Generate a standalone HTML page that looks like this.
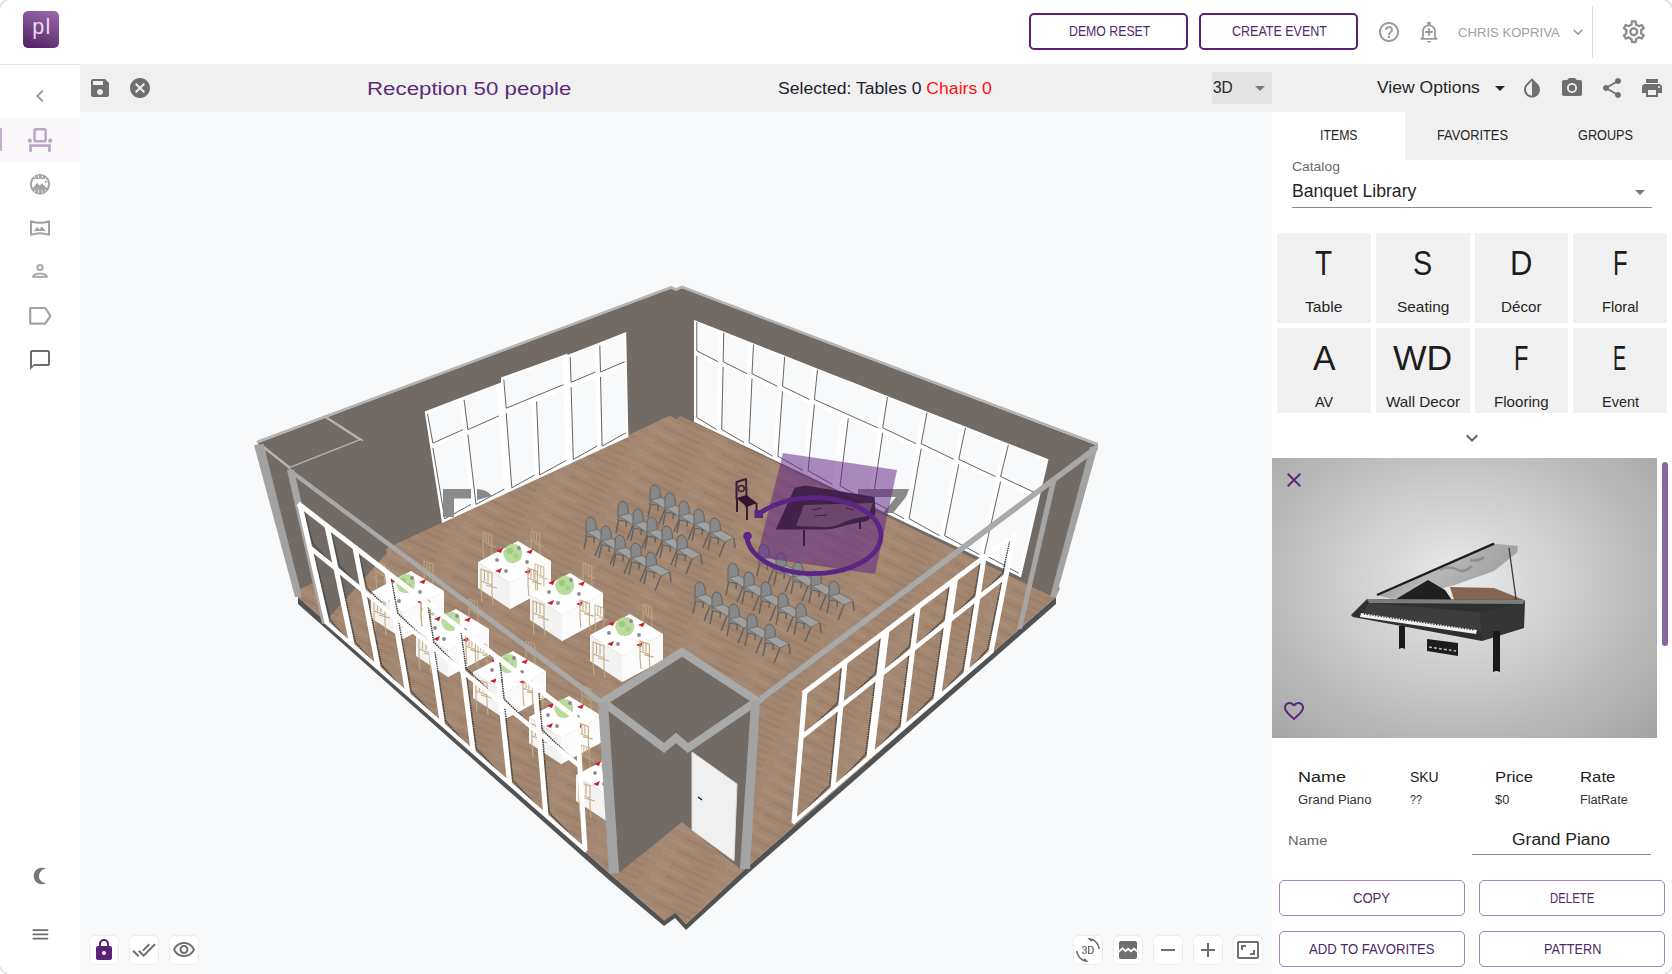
<!DOCTYPE html>
<html><head><meta charset="utf-8"><title>Planner</title>
<style>
html,body{margin:0;padding:0;}
body{width:1672px;height:974px;position:relative;overflow:hidden;background:#fff;font-family:"Liberation Sans",sans-serif;}
.t{position:absolute;white-space:nowrap;line-height:1;}
.c{text-align:center;}
.ic{position:absolute;}
</style></head><body>
<div style="position:absolute;left:0;top:0;width:1672px;height:64px;background:#fff;border-bottom:1px solid #e4e4e4"></div>
<div style="position:absolute;left:23px;top:11px;width:36px;height:37px;border-radius:5px;background:linear-gradient(200deg,#9a6aa8 0%,#7a4a8e 45%,#4e1e5e 100%)"></div>
<div class="t" style="left:32.30px;top:16.87px;font-size:21.54px;color:#eadcf0;letter-spacing:1.245px;">pl</div>
<div style="position:absolute;left:1029px;top:13px;width:155px;height:33px;border:2px solid #5b1f76;border-radius:5px"></div>
<div style="position:absolute;left:1199px;top:13px;width:155px;height:33px;border:2px solid #5b1f76;border-radius:5px"></div>
<div class="t" style="left:1068.70px;top:25.45px;font-size:13.72px;color:#4d2a6e;transform:scaleX(0.8964);transform-origin:0 0;">DEMO RESET</div>
<div class="t" style="left:1231.80px;top:25.45px;font-size:13.72px;color:#4d2a6e;transform:scaleX(0.9110);transform-origin:0 0;">CREATE EVENT</div>
<svg class="ic" style="left:1377px;top:20px;width:24px;height:24px" viewBox="0 0 24 24"><path fill="#9a9a9a" d="M11 18h2v-2h-2v2zm1-16C6.48 2 2 6.48 2 12s4.48 10 10 10 10-4.48 10-10S17.52 2 12 2zm0 18c-4.41 0-8-3.59-8-8s3.59-8 8-8 8 3.59 8 8-3.59 8-8 8zm0-14c-2.21 0-4 1.79-4 4h2c0-1.1.9-2 2-2s2 .9 2 2c0 2-3 1.75-3 5h2c0-2.25 3-2.5 3-5 0-2.21-1.79-4-4-4z"/></svg>
<svg class="ic" style="left:1417px;top:20px;width:24px;height:24px" viewBox="0 0 24 24"><path fill="none" stroke="#9a9a9a" stroke-width="1.8" stroke-linejoin="round" d="M6 17.2V11.6C6 8.4 8.2 6 11.1 5.4V2.6h1.8v2.8c2.9.6 5.1 3 5.1 6.2v5.6l1.7 1.6H4.3Z"/><path fill="#9a9a9a" d="M9.9 21.1h4.2c-.3 1-1.1 1.7-2.1 1.7s-1.8-.7-2.1-1.7z"/><path stroke="#9a9a9a" stroke-width="1.9" d="M12 8.2v7.5M8.2 12h7.5"/></svg>
<div class="t" style="left:1457.60px;top:25.60px;font-size:13.58px;color:#a0a0a0;transform:scaleX(0.9649);transform-origin:0 0;">CHRIS KOPRIVA</div>
<svg class="ic" style="left:1568px;top:22px;width:20px;height:20px" viewBox="0 0 24 24"><path fill="#9a9a9a" d="M16.59 8.59L12 13.17 7.41 8.59 6 10l6 6 6-6z"/></svg>
<div style="position:absolute;left:1592px;top:6px;width:1px;height:52px;background:#d8dce2"></div>
<svg class="ic" style="left:1619.7px;top:17.7px;width:27.6px;height:27.6px" viewBox="0 0 24 24"><path fill="#8e8e8e" d="M19.43 12.98c.04-.32.07-.64.07-.98 0-.34-.03-.66-.07-.98l2.11-1.65c.19-.15.24-.42.12-.64l-2-3.46a.5.5 0 0 0-.61-.22l-2.49 1c-.52-.4-1.08-.73-1.69-.98l-.38-2.65A.488.488 0 0 0 14 2h-4c-.25 0-.46.18-.49.42l-.38 2.65c-.61.25-1.17.59-1.69.98l-2.49-1a.566.566 0 0 0-.18-.03c-.17 0-.34.09-.43.25l-2 3.46c-.13.22-.07.49.12.64l2.11 1.65c-.04.32-.07.65-.07.98s.03.66.07.98l-2.11 1.65c-.19.15-.24.42-.12.64l2 3.46a.5.5 0 0 0 .61.22l2.49-1c.52.4 1.08.73 1.69.98l.38 2.650c.03.24.24.42.49.42h4c.25 0 .46-.18.49-.42l.38-2.65c.61-.25 1.170-.59 1.69-.98l2.49 1c.06.02.12.03.18.03.17 0 .34-.09.43-.25l2-3.46c.12-.22.07-.49-.12-.64l-2.11-1.65zm-1.98-1.71c.04.31.05.52.05.73 0 .21-.02.43-.05.73l-.14 1.13.89.7 1.08.84-.7 1.21-1.27-.51-1.04-.42-.9.68c-.43.32-.84.56-1.25.73l-1.06.43-.16 1.13-.2 1.35h-1.4l-.19-1.35-.16-1.13-1.06-.43c-.43-.18-.83-.41-1.23-.71l-.91-.7-1.06.43-1.27.51-.7-1.21 1.08-.84.89-.7-.14-1.13c-.03-.31-.05-.54-.05-.74s.02-.43.05-.73l.14-1.13-.89-.7-1.08-.84.7-1.21 1.27.51 1.04.42.9-.68c.43-.32.84-.56 1.25-.73l1.06-.43.16-1.13.2-1.35h1.39l.19 1.35.16 1.13 1.06.43c.43.18.83.41 1.23.71l.91.7 1.06-.43 1.27-.51.7 1.21-1.07.85-.89.7.14 1.13zM12 8c-2.21 0-4 1.79-4 4s1.79 4 4 4 4-1.790 4-4-1.79-4-4-4zm0 6c-1.1 0-2-.9-2-2s.9-2 2-2 2 .9 2 2-.9 2-2 2z"/></svg>
<div style="position:absolute;left:0;top:65px;width:80px;height:909px;background:#fff"></div>
<div style="position:absolute;left:0;top:118px;width:80px;height:44px;background:#f9f7fa"></div>
<div style="position:absolute;left:0;top:128px;width:2px;height:23px;background:#c6aed0"></div>
<svg class="ic" style="left:28px;top:84px;width:24px;height:24px" viewBox="0 0 24 24"><path fill="#9c9c9c" d="M15.41 7.41L14 6l-6 6 6 6 1.41-1.41L10.83 12z"/></svg>
<svg class="ic" style="left:26px;top:126px;width:28px;height:28px" viewBox="26 126 28 28"><rect x="34.55" y="129.25" width="11.1" height="12.1" rx="1.6" fill="none" stroke="#bca3c9" stroke-width="2.5"/><circle cx="29.9" cy="140.7" r="2.1" fill="#bca3c9"/><circle cx="50.2" cy="140.7" r="2.1" fill="#bca3c9"/><rect x="29.2" y="144.2" width="21.6" height="2.7" fill="#bca3c9"/><rect x="29.2" y="146" width="2.7" height="5.8" fill="#bca3c9"/><rect x="48.1" y="146" width="2.7" height="5.8" fill="#bca3c9"/></svg>
<svg class="ic" style="left:28px;top:172px;width:24px;height:24px" viewBox="28 172 24 24"><circle cx="40" cy="184.3" r="9.2" fill="none" stroke="#a3a3a3" stroke-width="2"/><path fill="#a3a3a3" d="M32.48,179 A9.2,9.2 0 0 1 47.52,179 Z M32.48,189.6 A9.2,9.2 0 0 0 47.52,189.6 Z"/><path stroke="#fff" stroke-width="1" d="M34.5,176.2 l0.8,2 M38.5,175.5 l0,2.5 M42.5,175.8 l-0.6,2.3 M46,177.5 l-1,1.4 M34.5,192.4 l0.8,-2 M38.5,193 l0,-2.6 M42.5,192.8 l-0.6,-2.3 M46,191.2 l-1,-1.4"/><path fill="#a3a3a3" d="M31.5,189.8 L37.2,182.8 L39.6,185.6 L42,183.4 L48.5,189.8 Z"/><circle cx="45.8" cy="181.8" r="1.1" fill="#a3a3a3"/></svg>
<svg class="ic" style="left:28px;top:216px;width:24px;height:24px" viewBox="0 0 24 24"><path fill="none" stroke="#a0a0a0" stroke-width="2" stroke-linejoin="round" d="M3 5.2c6 2.2 12 2.2 18 0v13.6c-6-2.2-12-2.2-18 0z"/><path fill="#a0a0a0" d="M6 15.3l3-4.3 2.4 2.6 2.4-3.2 4.2 4.9c-4-.5-8-.5-12 0z"/></svg>
<svg class="ic" style="left:28px;top:260px;width:24px;height:24px" viewBox="0 0 24 24"><circle cx="12" cy="7.5" r="2.6" fill="none" stroke="#a3a3a3" stroke-width="1.8"/><path fill="none" stroke="#a3a3a3" stroke-width="1.8" d="M5 16.8h14c0-1.6-3-3.2-7-3.2s-7 1.6-7 3.2z"/></svg>
<svg class="ic" style="left:28px;top:304px;width:24px;height:24px" viewBox="28 304 24 24"><path fill="none" stroke="#a3a3a3" stroke-width="2.2" stroke-linejoin="round" d="M30.2,308 h15 l5.2,7.8 -5.2,7.8 h-15 z"/></svg>
<svg class="ic" style="left:28.3px;top:347.6px;width:24px;height:24px" viewBox="0 0 24 24"><path fill="#6e6e6e" d="M20 2H4c-1.1 0-2 .9-2 2v18l4-4h14c1.1 0 2-.9 2-2V4c0-1.1-.9-2-2-2zm0 14H6l-2 2V4h16v12z"/></svg>
<svg class="ic" style="left:28px;top:864px;width:24px;height:24px" viewBox="28 864 24 24"><path fill="#777" d="M46.14,868.8 A8.3,8.3 0 1 0 46.14,883.2 A7.2,7.2 0 0 1 46.14,868.8 Z"/></svg>
<svg class="ic" style="left:29.7px;top:923.8px;width:20.8px;height:20.8px" viewBox="0 0 24 24"><path fill="#6e6e6e" d="M3 18h18v-2H3v2zm0-5h18v-2H3v2zm0-7v2h18V6H3z"/></svg>
<div style="position:absolute;left:80px;top:64px;width:1592px;height:48px;background:#f0f0f0"></div>
<svg class="ic" style="left:88px;top:76px;width:24px;height:24px" viewBox="0 0 24 24"><path fill="#6f6f6f" d="M17 3H5c-1.11 0-2 .9-2 2v14c0 1.1.89 2 2 2h14c1.1 0 2-.9 2-2V7l-4-4zm-5 16c-1.66 0-3-1.34-3-3s1.34-3 3-3 3 1.34 3 3-1.34 3-3 3zm3-10H5V5h10v4z"/></svg>
<svg class="ic" style="left:128px;top:76px;width:24px;height:24px" viewBox="0 0 24 24"><path fill="#6f6f6f" d="M12 2C6.47 2 2 6.47 2 12s4.47 10 10 10 10-4.47 10-10S17.53 2 12 2zm5 13.59L15.59 17 12 13.41 8.41 17 7 15.59 10.59 12 7 8.41 8.41 7 12 10.59 15.59 7 17 8.41 13.41 12 17 15.59z"/></svg>
<div class="t" style="left:366.60px;top:78.74px;font-size:19.20px;color:#5a2d79;transform:scaleX(1.1613);transform-origin:0 0;">Reception 50 people</div>
<div class="t" style="left:778.00px;top:79.71px;font-size:16.05px;color:#22222e;transform:scaleX(1.0975);transform-origin:0 0;">Selected: Tables 0 <span style="color:#ff1010">Chairs 0</span></div>
<div style="position:absolute;left:1212px;top:72px;width:60px;height:32px;background:#e3e3e3"></div>
<div class="t" style="left:1212.70px;top:79.55px;font-size:16.60px;color:#262626;transform:scaleX(0.9334);transform-origin:0 0;">3D</div>
<svg class="ic" style="left:1248px;top:76px;width:24px;height:24px" viewBox="0 0 24 24"><path fill="#777" d="M7 10l5 5 5-5z"/></svg>
<div class="t" style="left:1376.50px;top:78.97px;font-size:17.28px;color:#262626;transform:scaleX(1.0145);transform-origin:0 0;">View Options</div>
<svg class="ic" style="left:1488px;top:76px;width:24px;height:24px" viewBox="0 0 24 24"><path fill="#262626" d="M7 10l5 5 5-5z"/></svg>
<svg class="ic" style="left:1520px;top:76.3px;width:24px;height:24px" viewBox="0 0 24 24"><path fill="#6f6f6f" d="M17.66 7.93L12 2.27 6.34 7.93c-3.12 3.12-3.12 8.19 0 11.31C7.9 20.8 9.95 21.58 12 21.58c2.05 0 4.1-.78 5.66-2.34 3.12-3.12 3.12-8.19 0-11.31zM12 19.59c-1.6 0-3.11-.62-4.24-1.76C6.62 16.69 6 15.19 6 13.59s.62-3.11 1.76-4.24L12 5.1v14.49z"/></svg>
<svg class="ic" style="left:1560px;top:76px;width:24px;height:24px" viewBox="0 0 24 24"><path fill="#6f6f6f" d="M12 15.2A3.2 3.2 0 1 0 12 8.8a3.2 3.2 0 1 0 0 6.4zM9 2L7.17 4H4c-1.1 0-2 .9-2 2v12c0 1.1.9 2 2 2h16c1.1 0 2-.9 2-2V6c0-1.1-.9-2-2-2h-3.17L15 2H9zm3 15c-2.76 0-5-2.24-5-5s2.24-5 5-5 5 2.24 5 5-2.24 5-5 5z"/></svg>
<svg class="ic" style="left:1600px;top:76px;width:24px;height:24px" viewBox="0 0 24 24"><path fill="#6f6f6f" d="M18 16.08c-.76 0-1.44.3-1.96.77L8.91 12.7c.05-.23.09-.46.09-.7s-.04-.47-.09-.7l7.05-4.11c.54.5 1.25.81 2.04.81 1.66 0 3-1.34 3-3s-1.34-3-3-3-3 1.34-3 3c0 .24.04.47.09.7L8.04 9.81C7.5 9.31 6.79 9 6 9c-1.66 0-3 1.34-3 3s1.34 3 3 3c.79 0 1.5-.31 2.04-.81l7.12 4.16c-.05.21-.08.43-.08.65 0 1.61 1.31 2.92 2.92 2.92 1.61 0 2.92-1.31 2.92-2.92s-1.31-2.92-2.92-2.92z"/></svg>
<svg class="ic" style="left:1640px;top:76px;width:24px;height:24px" viewBox="0 0 24 24"><path fill="#6f6f6f" d="M19 8H5c-1.66 0-3 1.34-3 3v6h4v4h12v-4h4v-6c0-1.66-1.34-3-3-3zm-3 11H8v-5h8v5zm3-7c-.55 0-1-.45-1-1s.45-1 1-1 1 .45 1 1-.45 1-1 1zm-1-9H6v4h12V3z"/></svg>
<div style="position:absolute;left:80px;top:112px;width:1192px;height:862px;background:#f8f9fa"></div>
<svg style="position:absolute;left:0;top:0;width:1672px;height:974px" viewBox="0 0 1672 974">
<defs>
<pattern id="wood" width="64" height="14" patternUnits="userSpaceOnUse" patternTransform="rotate(25)">
<rect x="0" y="0" width="30" height="3.5" fill="#ad947f" opacity="0.45"/>
<rect x="36" y="1" width="20" height="2.5" fill="#937862" opacity="0.35"/>
<rect x="14" y="7" width="40" height="3" fill="#8f735e" opacity="0.35"/>
<rect x="0" y="10.5" width="12" height="2.5" fill="#b09884" opacity="0.35"/>
<rect x="50" y="10" width="14" height="3" fill="#a99079" opacity="0.4"/>
</pattern>
<filter id="soft" x="0" y="0" width="1" height="1"><feGaussianBlur stdDeviation="0.7"/></filter>
</defs>
<g>
<polygon points="298.0,597.0 609.0,873.0 664.0,920.0 675.0,912.0 686.0,924.0 745.0,869.0 1056.0,597.0 1056.0,604.0 745.0,876.0 686.0,930.0 675.0,918.0 664.0,926.0 609.0,880.0 298.0,604.0" fill="#525252" />
<polygon points="676.0,405.0 294.0,588.0 298.0,597.0 609.0,873.0 664.0,920.0 675.0,912.0 686.0,924.0 745.0,869.0 1056.0,597.0 1060.0,588.0" fill="#a2866f" />
<polygon points="676.0,405.0 294.0,588.0 298.0,597.0 609.0,873.0 664.0,920.0 675.0,912.0 686.0,924.0 745.0,869.0 1056.0,597.0 1060.0,588.0" fill="url(#wood)" />
<polygon points="258.0,443.0 671.0,288.0 676.0,290.0 682.0,288.0 1096.0,445.0 1051.0,596.0 680.5,416.0 676.0,419.0 670.0,415.5 300.0,589.0" fill="#726a64" />
<path d="M257,442 L671,287.5 L676,289.5 L682,287 L1097,444" fill="none" stroke="#b4b4b4" stroke-width="2.6"/>
<path d="M261,445 L290,468 L361,440 L324,416" fill="none" stroke="#b4b4b4" stroke-width="2.5"/>
<polygon points="254.0,445.0 263.5,444.0 302.0,597.0 295.0,597.0" fill="#a2a2a2" />
<polygon points="1090.0,447.0 1098.0,446.0 1056.0,597.0 1050.0,597.0" fill="#a2a2a2" />
<polygon points="424.7,411.6 461.3,397.6 461.3,397.6 498.5,383.4 498.5,383.4 501.0,382.5 501.0,377.6 532.5,366.2 532.5,366.2 564.9,354.4 564.9,354.4 567.4,353.5 567.4,355.0 597.0,343.4 597.0,343.4 626.2,331.9 628.4,436.9 599.3,450.3 570.5,463.6 568.0,464.8 536.8,479.2 509.0,492.0 506.6,493.2 473.2,508.6 442.0,523.0" fill="#ffffff" /><polygon points="426.9,413.8 459.1,399.8 462.9,430.2 432.3,443.6" fill="#f8f9fa" /><path d="M427.5,413.8 L432.9,443.1 L462.9,429.7" fill="none" stroke="#555" stroke-width="0.9"/><polygon points="432.3,448.0 462.9,434.6 471.0,504.9 444.2,519.3" fill="#f8f9fa" /><path d="M432.9,448.0 L444.8,518.8 L471.0,504.4" fill="none" stroke="#555" stroke-width="0.9"/><polygon points="463.5,399.8 496.3,385.6 498.9,416.4 467.3,430.2" fill="#f8f9fa" /><path d="M464.1,399.8 L467.9,429.7 L498.9,415.9" fill="none" stroke="#555" stroke-width="0.9"/><polygon points="467.3,434.6 498.9,420.8 504.4,489.5 475.4,504.9" fill="#f8f9fa" /><path d="M467.9,434.6 L476.0,504.4 L504.4,489.0" fill="none" stroke="#555" stroke-width="0.9"/><polygon points="503.2,379.8 562.7,356.6 563.6,385.1 505.6,408.7" fill="#f8f9fa" /><path d="M503.8,379.8 L506.2,408.2 L563.6,384.6" fill="none" stroke="#555" stroke-width="0.9"/><polygon points="505.6,413.1 531.6,401.6 534.6,475.5 511.2,488.3" fill="#f8f9fa" /><path d="M506.2,413.1 L511.8,487.8 L534.6,475.0" fill="none" stroke="#555" stroke-width="0.9"/><polygon points="536.0,401.6 563.6,389.5 565.8,461.1 539.0,475.5" fill="#f8f9fa" /><path d="M536.6,401.6 L539.6,475.0 L565.8,460.6" fill="none" stroke="#555" stroke-width="0.9"/><polygon points="569.6,357.2 594.8,345.6 595.5,372.5 570.5,382.8" fill="#f8f9fa" /><path d="M570.2,357.2 L571.1,382.3 L595.5,372.0" fill="none" stroke="#555" stroke-width="0.9"/><polygon points="570.5,387.2 595.5,376.9 597.1,446.6 572.7,459.9" fill="#f8f9fa" /><path d="M571.1,387.2 L573.3,459.4 L597.1,446.1" fill="none" stroke="#555" stroke-width="0.9"/><polygon points="599.2,345.6 624.0,334.1 624.7,362.2 599.9,372.5" fill="#f8f9fa" /><path d="M599.8,345.6 L600.5,372.0 L624.7,361.7" fill="none" stroke="#555" stroke-width="0.9"/><polygon points="599.9,376.9 624.7,366.6 626.2,433.2 601.5,446.6" fill="#f8f9fa" /><path d="M600.5,376.9 L602.1,446.1 L626.2,432.7" fill="none" stroke="#555" stroke-width="0.9"/>
<path d="M443,489 L471,489 L471,498.5 L454,498.5 L454,517 L443,517 Z M477,489 Q488,490 492,496 L477,500 Z" fill="#8a8a8a"/>
<polygon points="694.0,320.0 721.0,330.6 721.0,330.6 750.7,342.3 750.7,342.3 781.9,354.5 781.9,354.5 814.7,367.4 814.7,367.4 846.4,379.9 846.4,379.9 849.4,381.1 849.4,381.1 884.7,394.9 884.7,394.9 924.2,410.5 924.2,410.5 962.7,425.6 962.7,425.6 1005.6,442.5 1005.6,442.5 1048.5,459.3 1021.0,577.5 981.4,558.6 941.8,539.8 906.3,522.9 869.9,505.5 837.3,490.0 834.6,488.7 805.3,474.8 775.1,460.4 746.3,446.7 718.9,433.7 694.0,421.8" fill="#ffffff" /><polygon points="696.2,322.2 718.8,332.8 718.1,362.2 696.2,351.3" fill="#f8f9fa" /><path d="M696.8,322.2 L696.8,350.8 L718.1,361.7" fill="none" stroke="#555" stroke-width="0.9"/><polygon points="696.2,355.7 718.1,366.6 716.7,430.0 696.2,418.1" fill="#f8f9fa" /><path d="M696.8,355.7 L696.8,417.6 L716.7,429.5" fill="none" stroke="#555" stroke-width="0.9"/><polygon points="723.2,332.8 748.5,344.5 747.0,374.2 722.5,362.2" fill="#f8f9fa" /><path d="M723.8,332.8 L723.1,361.7 L747.0,373.7" fill="none" stroke="#555" stroke-width="0.9"/><polygon points="722.5,366.6 747.0,378.6 744.1,443.0 721.1,430.0" fill="#f8f9fa" /><path d="M723.1,366.6 L721.7,429.5 L744.1,442.5" fill="none" stroke="#555" stroke-width="0.9"/><polygon points="752.9,344.5 779.7,356.7 777.5,386.8 751.4,374.2" fill="#f8f9fa" /><path d="M753.5,344.5 L752.0,373.7 L777.5,386.3" fill="none" stroke="#555" stroke-width="0.9"/><polygon points="751.4,378.6 777.5,391.2 772.9,456.7 748.5,443.0" fill="#f8f9fa" /><path d="M752.0,378.6 L749.1,442.5 L772.9,456.2" fill="none" stroke="#555" stroke-width="0.9"/><polygon points="784.1,356.7 812.5,369.6 809.4,400.0 781.9,386.8" fill="#f8f9fa" /><path d="M784.7,356.7 L782.5,386.3 L809.4,399.5" fill="none" stroke="#555" stroke-width="0.9"/><polygon points="781.9,391.2 809.4,404.4 803.1,471.1 777.3,456.7" fill="#f8f9fa" /><path d="M782.5,391.2 L777.9,456.2 L803.1,470.6" fill="none" stroke="#555" stroke-width="0.9"/><polygon points="816.9,369.6 882.5,397.1 877.7,428.3 813.8,400.0" fill="#f8f9fa" /><path d="M817.5,369.6 L814.4,399.5 L877.7,427.8" fill="none" stroke="#555" stroke-width="0.9"/><polygon points="813.8,404.4 840.3,417.2 832.4,485.0 807.5,471.1" fill="#f8f9fa" /><path d="M814.4,404.4 L808.1,470.6 L832.4,484.5" fill="none" stroke="#555" stroke-width="0.9"/><polygon points="847.7,418.4 877.7,432.7 867.7,501.8 839.5,486.3" fill="#f8f9fa" /><path d="M848.3,418.4 L840.1,485.8 L867.7,501.3" fill="none" stroke="#555" stroke-width="0.9"/><polygon points="886.9,397.1 922.0,412.7 916.2,444.2 882.1,428.3" fill="#f8f9fa" /><path d="M887.5,397.1 L882.7,427.8 L916.2,443.7" fill="none" stroke="#555" stroke-width="0.9"/><polygon points="882.1,432.7 916.2,448.6 904.1,519.2 872.1,501.8" fill="#f8f9fa" /><path d="M882.7,432.7 L872.7,501.3 L904.1,518.7" fill="none" stroke="#555" stroke-width="0.9"/><polygon points="926.4,412.7 960.5,427.8 953.8,459.8 920.6,444.2" fill="#f8f9fa" /><path d="M927.0,412.7 L921.2,443.7 L953.8,459.3" fill="none" stroke="#555" stroke-width="0.9"/><polygon points="920.6,448.6 953.8,464.2 939.6,536.1 908.5,519.2" fill="#f8f9fa" /><path d="M921.2,448.6 L909.1,518.7 L939.6,535.6" fill="none" stroke="#555" stroke-width="0.9"/><polygon points="964.9,427.8 1003.4,444.7 995.6,477.1 958.2,459.8" fill="#f8f9fa" /><path d="M965.5,427.8 L958.8,459.3 L995.6,476.6" fill="none" stroke="#555" stroke-width="0.9"/><polygon points="958.2,464.2 995.6,481.5 979.2,554.9 944.0,536.1" fill="#f8f9fa" /><path d="M958.8,464.2 L944.6,535.6 L979.2,554.4" fill="none" stroke="#555" stroke-width="0.9"/><polygon points="1007.8,444.7 1046.3,461.5 1037.5,494.4 1000.0,477.1" fill="#f8f9fa" /><path d="M1008.4,444.7 L1000.6,476.6 L1037.5,493.9" fill="none" stroke="#555" stroke-width="0.9"/><polygon points="1000.0,481.5 1037.5,498.8 1018.8,573.8 983.6,554.9" fill="#f8f9fa" /><path d="M1000.6,481.5 L984.2,554.4 L1018.8,573.3" fill="none" stroke="#555" stroke-width="0.9"/>
<path d="M858,489 L909,489 L906,497 L893,513 L883,513 L896,497 L858,497 Z" fill="#8a8a8a"/>
<path d="M651,502 L648,517 M665,509 L659,524 M674,505 L675,515 M659,498 L658,511" stroke="#626262" stroke-width="1.5" fill="none"/><path d="M650,504 L650,490 Q651,485 655,485 Q659,486 660,491 L661,506 Z" fill="#888888" stroke="#626262" stroke-width="1"/><polygon points="651.0,500.0 661.0,497.5 674.0,504.5 665.0,509.0" fill="#a0a0a0" stroke="#626262" stroke-width="0.7"/>
<path d="M666,510 L663,525 M680,517 L674,532 M689,513 L690,523 M674,506 L673,519" stroke="#626262" stroke-width="1.5" fill="none"/><path d="M665,512 L665,498 Q666,493 670,493 Q674,494 675,499 L676,514 Z" fill="#888888" stroke="#626262" stroke-width="1"/><polygon points="666.0,508.0 676.0,505.5 689.0,512.5 680.0,517.0" fill="#a0a0a0" stroke="#626262" stroke-width="0.7"/>
<path d="M680,518 L677,533 M694,525 L688,540 M703,521 L704,531 M688,514 L687,527" stroke="#626262" stroke-width="1.5" fill="none"/><path d="M679,520 L679,506 Q680,501 684,501 Q688,502 689,507 L690,522 Z" fill="#888888" stroke="#626262" stroke-width="1"/><polygon points="680.0,516.0 690.0,513.5 703.0,520.5 694.0,525.0" fill="#a0a0a0" stroke="#626262" stroke-width="0.7"/>
<path d="M695,526 L692,541 M709,533 L703,548 M718,529 L719,539 M703,522 L702,535" stroke="#626262" stroke-width="1.5" fill="none"/><path d="M694,528 L694,514 Q695,509 699,509 Q703,510 704,515 L705,530 Z" fill="#888888" stroke="#626262" stroke-width="1"/><polygon points="695.0,524.0 705.0,521.5 718.0,528.5 709.0,533.0" fill="#a0a0a0" stroke="#626262" stroke-width="0.7"/>
<path d="M711,535 L708,550 M725,542 L719,557 M734,538 L735,548 M719,531 L718,544" stroke="#626262" stroke-width="1.5" fill="none"/><path d="M710,537 L710,523 Q711,518 715,518 Q719,519 720,524 L721,539 Z" fill="#888888" stroke="#626262" stroke-width="1"/><polygon points="711.0,533.0 721.0,530.5 734.0,537.5 725.0,542.0" fill="#a0a0a0" stroke="#626262" stroke-width="0.7"/>
<path d="M619,518 L616,533 M633,525 L627,540 M642,521 L643,531 M627,514 L626,527" stroke="#626262" stroke-width="1.5" fill="none"/><path d="M618,520 L618,506 Q619,501 623,501 Q627,502 628,507 L629,522 Z" fill="#888888" stroke="#626262" stroke-width="1"/><polygon points="619.0,516.0 629.0,513.5 642.0,520.5 633.0,525.0" fill="#a0a0a0" stroke="#626262" stroke-width="0.7"/>
<path d="M634,526 L631,541 M648,533 L642,548 M657,529 L658,539 M642,522 L641,535" stroke="#626262" stroke-width="1.5" fill="none"/><path d="M633,528 L633,514 Q634,509 638,509 Q642,510 643,515 L644,530 Z" fill="#888888" stroke="#626262" stroke-width="1"/><polygon points="634.0,524.0 644.0,521.5 657.0,528.5 648.0,533.0" fill="#a0a0a0" stroke="#626262" stroke-width="0.7"/>
<path d="M648,534 L645,549 M662,541 L656,556 M671,537 L672,547 M656,530 L655,543" stroke="#626262" stroke-width="1.5" fill="none"/><path d="M647,536 L647,522 Q648,517 652,517 Q656,518 657,523 L658,538 Z" fill="#888888" stroke="#626262" stroke-width="1"/><polygon points="648.0,532.0 658.0,529.5 671.0,536.5 662.0,541.0" fill="#a0a0a0" stroke="#626262" stroke-width="0.7"/>
<path d="M663,543 L660,558 M677,550 L671,565 M686,546 L687,556 M671,539 L670,552" stroke="#626262" stroke-width="1.5" fill="none"/><path d="M662,545 L662,531 Q663,526 667,526 Q671,527 672,532 L673,547 Z" fill="#888888" stroke="#626262" stroke-width="1"/><polygon points="663.0,541.0 673.0,538.5 686.0,545.5 677.0,550.0" fill="#a0a0a0" stroke="#626262" stroke-width="0.7"/>
<path d="M678,552 L675,567 M692,559 L686,574 M701,555 L702,565 M686,548 L685,561" stroke="#626262" stroke-width="1.5" fill="none"/><path d="M677,554 L677,540 Q678,535 682,535 Q686,536 687,541 L688,556 Z" fill="#888888" stroke="#626262" stroke-width="1"/><polygon points="678.0,550.0 688.0,547.5 701.0,554.5 692.0,559.0" fill="#a0a0a0" stroke="#626262" stroke-width="0.7"/>
<path d="M587,534 L584,549 M601,541 L595,556 M610,537 L611,547 M595,530 L594,543" stroke="#626262" stroke-width="1.5" fill="none"/><path d="M586,536 L586,522 Q587,517 591,517 Q595,518 596,523 L597,538 Z" fill="#888888" stroke="#626262" stroke-width="1"/><polygon points="587.0,532.0 597.0,529.5 610.0,536.5 601.0,541.0" fill="#a0a0a0" stroke="#626262" stroke-width="0.7"/>
<path d="M602,543 L599,558 M616,550 L610,565 M625,546 L626,556 M610,539 L609,552" stroke="#626262" stroke-width="1.5" fill="none"/><path d="M601,545 L601,531 Q602,526 606,526 Q610,527 611,532 L612,547 Z" fill="#888888" stroke="#626262" stroke-width="1"/><polygon points="602.0,541.0 612.0,538.5 625.0,545.5 616.0,550.0" fill="#a0a0a0" stroke="#626262" stroke-width="0.7"/>
<path d="M616,552 L613,567 M630,559 L624,574 M639,555 L640,565 M624,548 L623,561" stroke="#626262" stroke-width="1.5" fill="none"/><path d="M615,554 L615,540 Q616,535 620,535 Q624,536 625,541 L626,556 Z" fill="#888888" stroke="#626262" stroke-width="1"/><polygon points="616.0,550.0 626.0,547.5 639.0,554.5 630.0,559.0" fill="#a0a0a0" stroke="#626262" stroke-width="0.7"/>
<path d="M632,560 L629,575 M646,567 L640,582 M655,563 L656,573 M640,556 L639,569" stroke="#626262" stroke-width="1.5" fill="none"/><path d="M631,562 L631,548 Q632,543 636,543 Q640,544 641,549 L642,564 Z" fill="#888888" stroke="#626262" stroke-width="1"/><polygon points="632.0,558.0 642.0,555.5 655.0,562.5 646.0,567.0" fill="#a0a0a0" stroke="#626262" stroke-width="0.7"/>
<path d="M647,569 L644,584 M661,576 L655,591 M670,572 L671,582 M655,565 L654,578" stroke="#626262" stroke-width="1.5" fill="none"/><path d="M646,571 L646,557 Q647,552 651,552 Q655,553 656,558 L657,573 Z" fill="#888888" stroke="#626262" stroke-width="1"/><polygon points="647.0,567.0 657.0,564.5 670.0,571.5 661.0,576.0" fill="#a0a0a0" stroke="#626262" stroke-width="0.7"/>
<path d="M760,561 L757,576 M774,568 L768,583 M783,564 L784,574 M768,557 L767,570" stroke="#626262" stroke-width="1.5" fill="none"/><path d="M759,563 L759,549 Q760,544 764,544 Q768,545 769,550 L770,565 Z" fill="#888888" stroke="#626262" stroke-width="1"/><polygon points="760.0,559.0 770.0,556.5 783.0,563.5 774.0,568.0" fill="#a0a0a0" stroke="#626262" stroke-width="0.7"/>
<path d="M777,570 L774,585 M791,577 L785,592 M800,573 L801,583 M785,566 L784,579" stroke="#626262" stroke-width="1.5" fill="none"/><path d="M776,572 L776,558 Q777,553 781,553 Q785,554 786,559 L787,574 Z" fill="#888888" stroke="#626262" stroke-width="1"/><polygon points="777.0,568.0 787.0,565.5 800.0,572.5 791.0,577.0" fill="#a0a0a0" stroke="#626262" stroke-width="0.7"/>
<path d="M794,579 L791,594 M808,586 L802,601 M817,582 L818,592 M802,575 L801,588" stroke="#626262" stroke-width="1.5" fill="none"/><path d="M793,581 L793,567 Q794,562 798,562 Q802,563 803,568 L804,583 Z" fill="#888888" stroke="#626262" stroke-width="1"/><polygon points="794.0,577.0 804.0,574.5 817.0,581.5 808.0,586.0" fill="#a0a0a0" stroke="#626262" stroke-width="0.7"/>
<path d="M812,588 L809,603 M826,595 L820,610 M835,591 L836,601 M820,584 L819,597" stroke="#626262" stroke-width="1.5" fill="none"/><path d="M811,590 L811,576 Q812,571 816,571 Q820,572 821,577 L822,592 Z" fill="#888888" stroke="#626262" stroke-width="1"/><polygon points="812.0,586.0 822.0,583.5 835.0,590.5 826.0,595.0" fill="#a0a0a0" stroke="#626262" stroke-width="0.7"/>
<path d="M830,598 L827,613 M844,605 L838,620 M853,601 L854,611 M838,594 L837,607" stroke="#626262" stroke-width="1.5" fill="none"/><path d="M829,600 L829,586 Q830,581 834,581 Q838,582 839,587 L840,602 Z" fill="#888888" stroke="#626262" stroke-width="1"/><polygon points="830.0,596.0 840.0,593.5 853.0,600.5 844.0,605.0" fill="#a0a0a0" stroke="#626262" stroke-width="0.7"/>
<path d="M729,580 L726,595 M743,587 L737,602 M752,583 L753,593 M737,576 L736,589" stroke="#626262" stroke-width="1.5" fill="none"/><path d="M728,582 L728,568 Q729,563 733,563 Q737,564 738,569 L739,584 Z" fill="#888888" stroke="#626262" stroke-width="1"/><polygon points="729.0,578.0 739.0,575.5 752.0,582.5 743.0,587.0" fill="#a0a0a0" stroke="#626262" stroke-width="0.7"/>
<path d="M745,589 L742,604 M759,596 L753,611 M768,592 L769,602 M753,585 L752,598" stroke="#626262" stroke-width="1.5" fill="none"/><path d="M744,591 L744,577 Q745,572 749,572 Q753,573 754,578 L755,593 Z" fill="#888888" stroke="#626262" stroke-width="1"/><polygon points="745.0,587.0 755.0,584.5 768.0,591.5 759.0,596.0" fill="#a0a0a0" stroke="#626262" stroke-width="0.7"/>
<path d="M762,599 L759,614 M776,606 L770,621 M785,602 L786,612 M770,595 L769,608" stroke="#626262" stroke-width="1.5" fill="none"/><path d="M761,601 L761,587 Q762,582 766,582 Q770,583 771,588 L772,603 Z" fill="#888888" stroke="#626262" stroke-width="1"/><polygon points="762.0,597.0 772.0,594.5 785.0,601.5 776.0,606.0" fill="#a0a0a0" stroke="#626262" stroke-width="0.7"/>
<path d="M779,610 L776,625 M793,617 L787,632 M802,613 L803,623 M787,606 L786,619" stroke="#626262" stroke-width="1.5" fill="none"/><path d="M778,612 L778,598 Q779,593 783,593 Q787,594 788,599 L789,614 Z" fill="#888888" stroke="#626262" stroke-width="1"/><polygon points="779.0,608.0 789.0,605.5 802.0,612.5 793.0,617.0" fill="#a0a0a0" stroke="#626262" stroke-width="0.7"/>
<path d="M797,620 L794,635 M811,627 L805,642 M820,623 L821,633 M805,616 L804,629" stroke="#626262" stroke-width="1.5" fill="none"/><path d="M796,622 L796,608 Q797,603 801,603 Q805,604 806,609 L807,624 Z" fill="#888888" stroke="#626262" stroke-width="1"/><polygon points="797.0,618.0 807.0,615.5 820.0,622.5 811.0,627.0" fill="#a0a0a0" stroke="#626262" stroke-width="0.7"/>
<path d="M696,599 L693,614 M710,606 L704,621 M719,602 L720,612 M704,595 L703,608" stroke="#626262" stroke-width="1.5" fill="none"/><path d="M695,601 L695,587 Q696,582 700,582 Q704,583 705,588 L706,603 Z" fill="#888888" stroke="#626262" stroke-width="1"/><polygon points="696.0,597.0 706.0,594.5 719.0,601.5 710.0,606.0" fill="#a0a0a0" stroke="#626262" stroke-width="0.7"/>
<path d="M713,609 L710,624 M727,616 L721,631 M736,612 L737,622 M721,605 L720,618" stroke="#626262" stroke-width="1.5" fill="none"/><path d="M712,611 L712,597 Q713,592 717,592 Q721,593 722,598 L723,613 Z" fill="#888888" stroke="#626262" stroke-width="1"/><polygon points="713.0,607.0 723.0,604.5 736.0,611.5 727.0,616.0" fill="#a0a0a0" stroke="#626262" stroke-width="0.7"/>
<path d="M730,621 L727,636 M744,628 L738,643 M753,624 L754,634 M738,617 L737,630" stroke="#626262" stroke-width="1.5" fill="none"/><path d="M729,623 L729,609 Q730,604 734,604 Q738,605 739,610 L740,625 Z" fill="#888888" stroke="#626262" stroke-width="1"/><polygon points="730.0,619.0 740.0,616.5 753.0,623.5 744.0,628.0" fill="#a0a0a0" stroke="#626262" stroke-width="0.7"/>
<path d="M748,631 L745,646 M762,638 L756,653 M771,634 L772,644 M756,627 L755,640" stroke="#626262" stroke-width="1.5" fill="none"/><path d="M747,633 L747,619 Q748,614 752,614 Q756,615 757,620 L758,635 Z" fill="#888888" stroke="#626262" stroke-width="1"/><polygon points="748.0,629.0 758.0,626.5 771.0,633.5 762.0,638.0" fill="#a0a0a0" stroke="#626262" stroke-width="0.7"/>
<path d="M766,641 L763,656 M780,648 L774,663 M789,644 L790,654 M774,637 L773,650" stroke="#626262" stroke-width="1.5" fill="none"/><path d="M765,643 L765,629 Q766,624 770,624 Q774,625 775,630 L776,645 Z" fill="#888888" stroke="#626262" stroke-width="1"/><polygon points="766.0,639.0 776.0,636.5 789.0,643.5 780.0,648.0" fill="#a0a0a0" stroke="#626262" stroke-width="0.7"/>
<path d="M736.5,499 L736.5,482 L746,479 L746.5,497" fill="none" stroke="#3b1b3b" stroke-width="2"/><circle cx="741.3" cy="488.5" r="3" fill="none" stroke="#3b1b3b" stroke-width="1.4"/><polygon points="736.5,498 746.5,495 757,503 747,507" fill="#33152f"/><path d="M737,499 L737,512 M747,507 L747,520 M756.5,503 L756.5,514 M746,496 L746,507" stroke="#2e122c" stroke-width="1.8"/>
<g opacity="0.8" fill="none" stroke="#c3ad82" stroke-width="1.1"><path d="M483.0,548.0 L483.0,532.0 L491.8,535.2 L491.8,551.2"/><path d="M485.8,533.2 L485.8,541.6 M488.6,534.2 L488.6,542.4 M483.0,541.6 L491.8,544.8"/><path d="M483.0,548.0 L483.8,558.4 M491.8,551.2 L492.6,560.8 M487.0,544.8 L495.8,547.2"/></g><g opacity="0.8" fill="none" stroke="#c3ad82" stroke-width="1.1"><path d="M531.0,547.0 L531.0,531.0 L539.8,534.2 L539.8,550.2"/><path d="M533.8,532.2 L533.8,540.6 M536.6,533.2 L536.6,541.4 M531.0,540.6 L539.8,543.8"/><path d="M531.0,547.0 L531.8,557.4 M539.8,550.2 L540.6,559.8 M535.0,543.8 L543.8,546.2"/></g><polygon points="478.0,562.0 510.0,583.0 551.0,561.0 551.0,587.0 510.0,609.0 478.0,588.0" fill="#f3f3f3" /><polygon points="510.0,583.0 551.0,561.0 551.0,587.0 510.0,609.0" fill="#fbfbfb" /><polygon points="478.0,562.0 518.0,541.0 551.0,561.0 510.0,583.0" fill="#ffffff" /><path d="M503.0,553.0 q3,-9 10,-9 q8,0 9,8 q1,9 -8,11 q-9,1 -11,-10z" fill="#b9dc9e"/><circle cx="510.0" cy="551.0" r="3.2" fill="#9fcb80"/><circle cx="516.0" cy="556.0" r="2.8" fill="#a7d08a"/><circle cx="497.0" cy="560.0" r="1.9" fill="#8c8c8c"/><circle cx="506.0" cy="571.0" r="1.9" fill="#8c8c8c"/><circle cx="527.0" cy="562.0" r="1.9" fill="#8c8c8c"/><circle cx="519.0" cy="548.0" r="1.9" fill="#8c8c8c"/><path d="M496.0,551.0 l7,-3 l-2,5 z" fill="#cc1f2e"/><path d="M526.0,552.0 l7,-3 l-2,5 z" fill="#cc1f2e"/><path d="M495.0,571.0 l7,-3 l-2,5 z" fill="#cc1f2e"/><path d="M524.0,572.0 l7,-3 l-2,5 z" fill="#cc1f2e"/><g opacity="1.0" fill="none" stroke="#c3ad82" stroke-width="1.1"><path d="M481.0,589.0 L481.0,569.0 L492.0,573.0 L492.0,593.0"/><path d="M484.5,570.5 L484.5,581.0 M488.0,571.7 L488.0,582.0 M481.0,581.0 L492.0,585.0"/><path d="M481.0,589.0 L482.0,602.0 M492.0,593.0 L493.0,605.0 M486.0,585.0 L497.0,588.0"/></g><g opacity="1.0" fill="none" stroke="#c3ad82" stroke-width="1.1"><path d="M528.0,585.0 L528.0,568.0 L537.4,571.4 L537.4,588.4"/><path d="M531.0,569.3 L531.0,578.2 M534.0,570.3 L534.0,579.0 M528.0,578.2 L537.4,581.6"/><path d="M528.0,585.0 L528.9,596.0 M537.4,588.4 L538.2,598.6 M532.2,581.6 L541.6,584.1"/></g>
<g opacity="0.8" fill="none" stroke="#c3ad82" stroke-width="1.1"><path d="M535.0,580.0 L535.0,564.0 L543.8,567.2 L543.8,583.2"/><path d="M537.8,565.2 L537.8,573.6 M540.6,566.2 L540.6,574.4 M535.0,573.6 L543.8,576.8"/><path d="M535.0,580.0 L535.8,590.4 M543.8,583.2 L544.6,592.8 M539.0,576.8 L547.8,579.2"/></g><g opacity="0.8" fill="none" stroke="#c3ad82" stroke-width="1.1"><path d="M583.0,579.0 L583.0,563.0 L591.8,566.2 L591.8,582.2"/><path d="M585.8,564.2 L585.8,572.6 M588.6,565.2 L588.6,573.4 M583.0,572.6 L591.8,575.8"/><path d="M583.0,579.0 L583.8,589.4 M591.8,582.2 L592.6,591.8 M587.0,575.8 L595.8,578.2"/></g><polygon points="530.0,594.0 562.0,615.0 603.0,593.0 603.0,619.0 562.0,641.0 530.0,620.0" fill="#f3f3f3" /><polygon points="562.0,615.0 603.0,593.0 603.0,619.0 562.0,641.0" fill="#fbfbfb" /><polygon points="530.0,594.0 570.0,573.0 603.0,593.0 562.0,615.0" fill="#ffffff" /><path d="M555.0,585.0 q3,-9 10,-9 q8,0 9,8 q1,9 -8,11 q-9,1 -11,-10z" fill="#b9dc9e"/><circle cx="562.0" cy="583.0" r="3.2" fill="#9fcb80"/><circle cx="568.0" cy="588.0" r="2.8" fill="#a7d08a"/><circle cx="549.0" cy="592.0" r="1.9" fill="#8c8c8c"/><circle cx="558.0" cy="603.0" r="1.9" fill="#8c8c8c"/><circle cx="579.0" cy="594.0" r="1.9" fill="#8c8c8c"/><circle cx="571.0" cy="580.0" r="1.9" fill="#8c8c8c"/><path d="M548.0,583.0 l7,-3 l-2,5 z" fill="#cc1f2e"/><path d="M578.0,584.0 l7,-3 l-2,5 z" fill="#cc1f2e"/><path d="M547.0,603.0 l7,-3 l-2,5 z" fill="#cc1f2e"/><path d="M576.0,604.0 l7,-3 l-2,5 z" fill="#cc1f2e"/><g opacity="1.0" fill="none" stroke="#c3ad82" stroke-width="1.1"><path d="M533.0,621.0 L533.0,601.0 L544.0,605.0 L544.0,625.0"/><path d="M536.5,602.5 L536.5,613.0 M540.0,603.7 L540.0,614.0 M533.0,613.0 L544.0,617.0"/><path d="M533.0,621.0 L534.0,634.0 M544.0,625.0 L545.0,637.0 M538.0,617.0 L549.0,620.0"/></g><g opacity="1.0" fill="none" stroke="#c3ad82" stroke-width="1.1"><path d="M580.0,617.0 L580.0,600.0 L589.4,603.4 L589.4,620.4"/><path d="M583.0,601.3 L583.0,610.2 M586.0,602.3 L586.0,611.0 M580.0,610.2 L589.4,613.6"/><path d="M580.0,617.0 L580.9,628.0 M589.4,620.4 L590.2,630.6 M584.2,613.6 L593.6,616.1"/></g>
<g opacity="0.8" fill="none" stroke="#c3ad82" stroke-width="1.1"><path d="M595.0,621.0 L595.0,605.0 L603.8,608.2 L603.8,624.2"/><path d="M597.8,606.2 L597.8,614.6 M600.6,607.2 L600.6,615.4 M595.0,614.6 L603.8,617.8"/><path d="M595.0,621.0 L595.8,631.4 M603.8,624.2 L604.6,633.8 M599.0,617.8 L607.8,620.2"/></g><g opacity="0.8" fill="none" stroke="#c3ad82" stroke-width="1.1"><path d="M643.0,620.0 L643.0,604.0 L651.8,607.2 L651.8,623.2"/><path d="M645.8,605.2 L645.8,613.6 M648.6,606.2 L648.6,614.4 M643.0,613.6 L651.8,616.8"/><path d="M643.0,620.0 L643.8,630.4 M651.8,623.2 L652.6,632.8 M647.0,616.8 L655.8,619.2"/></g><polygon points="590.0,635.0 622.0,656.0 663.0,634.0 663.0,660.0 622.0,682.0 590.0,661.0" fill="#f3f3f3" /><polygon points="622.0,656.0 663.0,634.0 663.0,660.0 622.0,682.0" fill="#fbfbfb" /><polygon points="590.0,635.0 630.0,614.0 663.0,634.0 622.0,656.0" fill="#ffffff" /><path d="M615.0,626.0 q3,-9 10,-9 q8,0 9,8 q1,9 -8,11 q-9,1 -11,-10z" fill="#b9dc9e"/><circle cx="622.0" cy="624.0" r="3.2" fill="#9fcb80"/><circle cx="628.0" cy="629.0" r="2.8" fill="#a7d08a"/><circle cx="609.0" cy="633.0" r="1.9" fill="#8c8c8c"/><circle cx="618.0" cy="644.0" r="1.9" fill="#8c8c8c"/><circle cx="639.0" cy="635.0" r="1.9" fill="#8c8c8c"/><circle cx="631.0" cy="621.0" r="1.9" fill="#8c8c8c"/><path d="M608.0,624.0 l7,-3 l-2,5 z" fill="#cc1f2e"/><path d="M638.0,625.0 l7,-3 l-2,5 z" fill="#cc1f2e"/><path d="M607.0,644.0 l7,-3 l-2,5 z" fill="#cc1f2e"/><path d="M636.0,645.0 l7,-3 l-2,5 z" fill="#cc1f2e"/><g opacity="1.0" fill="none" stroke="#c3ad82" stroke-width="1.1"><path d="M593.0,662.0 L593.0,642.0 L604.0,646.0 L604.0,666.0"/><path d="M596.5,643.5 L596.5,654.0 M600.0,644.7 L600.0,655.0 M593.0,654.0 L604.0,658.0"/><path d="M593.0,662.0 L594.0,675.0 M604.0,666.0 L605.0,678.0 M598.0,658.0 L609.0,661.0"/></g><g opacity="1.0" fill="none" stroke="#c3ad82" stroke-width="1.1"><path d="M640.0,658.0 L640.0,641.0 L649.4,644.4 L649.4,661.4"/><path d="M643.0,642.3 L643.0,651.2 M646.0,643.3 L646.0,652.0 M640.0,651.2 L649.4,654.6"/><path d="M640.0,658.0 L640.9,669.0 M649.4,661.4 L650.2,671.6 M644.2,654.6 L653.6,657.1"/></g>
<polygon points="783.0,453.0 897.0,470.0 875.0,574.0 757.0,557.0" fill="#5e2387" opacity="0.52"/>
<path d="M776,529 L794.7,487.7 L805.4,485.4 L874.7,497 L875.5,514 L867,521 Q850,524 840,527 Q830,530 822,529.5 L776,529.5 Z" fill="#3a1d45" opacity="0.9"/>
<path d="M804,505 L873,503 L868,516 Q852,518 840,524 Q830,528 822,527 L796,526 Z" fill="#6e4b6d" opacity="0.95"/>
<path d="M812,510 l10,-2 M815,516 l12,-1 M846,508 l8,2" stroke="#3a1d45" stroke-width="1"/>
<line x1="804.0" y1="530.0" x2="804.0" y2="546.0" stroke="#3a1d45" stroke-width="2" />
<line x1="860.0" y1="520.0" x2="860.0" y2="529.0" stroke="#3a1d45" stroke-width="2" />
<path d="M759,514 A67 38 0 1 1 747,536" fill="none" stroke="#5c2585" stroke-width="4.8"/>
<rect x="754.5" y="510" width="8.5" height="8" fill="#5c2585"/>
<circle cx="747.5" cy="536" r="4.3" fill="#5c2585"/>
<polygon points="290.0,468.0 361.0,440.0 387.0,553.0 324.0,623.0" fill="#726a64" />
<g opacity="0.8" fill="none" stroke="#c3ad82" stroke-width="1.1"><path d="M376.0,578.0 L376.0,562.0 L384.8,565.2 L384.8,581.2"/><path d="M378.8,563.2 L378.8,571.6 M381.6,564.2 L381.6,572.4 M376.0,571.6 L384.8,574.8"/><path d="M376.0,578.0 L376.8,588.4 M384.8,581.2 L385.6,590.8 M380.0,574.8 L388.8,577.2"/></g><g opacity="0.8" fill="none" stroke="#c3ad82" stroke-width="1.1"><path d="M424.0,577.0 L424.0,561.0 L432.8,564.2 L432.8,580.2"/><path d="M426.8,562.2 L426.8,570.6 M429.6,563.2 L429.6,571.4 M424.0,570.6 L432.8,573.8"/><path d="M424.0,577.0 L424.8,587.4 M432.8,580.2 L433.6,589.8 M428.0,573.8 L436.8,576.2"/></g><polygon points="371.0,592.0 403.0,613.0 444.0,591.0 444.0,617.0 403.0,639.0 371.0,618.0" fill="#f3f3f3" /><polygon points="403.0,613.0 444.0,591.0 444.0,617.0 403.0,639.0" fill="#fbfbfb" /><polygon points="371.0,592.0 411.0,571.0 444.0,591.0 403.0,613.0" fill="#ffffff" /><path d="M396.0,583.0 q3,-9 10,-9 q8,0 9,8 q1,9 -8,11 q-9,1 -11,-10z" fill="#b9dc9e"/><circle cx="403.0" cy="581.0" r="3.2" fill="#9fcb80"/><circle cx="409.0" cy="586.0" r="2.8" fill="#a7d08a"/><circle cx="390.0" cy="590.0" r="1.9" fill="#8c8c8c"/><circle cx="399.0" cy="601.0" r="1.9" fill="#8c8c8c"/><circle cx="420.0" cy="592.0" r="1.9" fill="#8c8c8c"/><circle cx="412.0" cy="578.0" r="1.9" fill="#8c8c8c"/><path d="M389.0,581.0 l7,-3 l-2,5 z" fill="#cc1f2e"/><path d="M419.0,582.0 l7,-3 l-2,5 z" fill="#cc1f2e"/><path d="M388.0,601.0 l7,-3 l-2,5 z" fill="#cc1f2e"/><path d="M417.0,602.0 l7,-3 l-2,5 z" fill="#cc1f2e"/><g opacity="1.0" fill="none" stroke="#c3ad82" stroke-width="1.1"><path d="M374.0,619.0 L374.0,599.0 L385.0,603.0 L385.0,623.0"/><path d="M377.5,600.5 L377.5,611.0 M381.0,601.7 L381.0,612.0 M374.0,611.0 L385.0,615.0"/><path d="M374.0,619.0 L375.0,632.0 M385.0,623.0 L386.0,635.0 M379.0,615.0 L390.0,618.0"/></g><g opacity="1.0" fill="none" stroke="#c3ad82" stroke-width="1.1"><path d="M421.0,615.0 L421.0,598.0 L430.4,601.4 L430.4,618.4"/><path d="M424.0,599.3 L424.0,608.2 M426.9,600.3 L426.9,609.0 M421.0,608.2 L430.4,611.6"/><path d="M421.0,615.0 L421.9,626.0 M430.4,618.4 L431.2,628.6 M425.2,611.6 L434.6,614.1"/></g>
<g opacity="0.8" fill="none" stroke="#c3ad82" stroke-width="1.1"><path d="M421.0,616.0 L421.0,600.0 L429.8,603.2 L429.8,619.2"/><path d="M423.8,601.2 L423.8,609.6 M426.6,602.2 L426.6,610.4 M421.0,609.6 L429.8,612.8"/><path d="M421.0,616.0 L421.8,626.4 M429.8,619.2 L430.6,628.8 M425.0,612.8 L433.8,615.2"/></g><g opacity="0.8" fill="none" stroke="#c3ad82" stroke-width="1.1"><path d="M469.0,615.0 L469.0,599.0 L477.8,602.2 L477.8,618.2"/><path d="M471.8,600.2 L471.8,608.6 M474.6,601.2 L474.6,609.4 M469.0,608.6 L477.8,611.8"/><path d="M469.0,615.0 L469.8,625.4 M477.8,618.2 L478.6,627.8 M473.0,611.8 L481.8,614.2"/></g><polygon points="416.0,630.0 448.0,651.0 489.0,629.0 489.0,655.0 448.0,677.0 416.0,656.0" fill="#f3f3f3" /><polygon points="448.0,651.0 489.0,629.0 489.0,655.0 448.0,677.0" fill="#fbfbfb" /><polygon points="416.0,630.0 456.0,609.0 489.0,629.0 448.0,651.0" fill="#ffffff" /><path d="M441.0,621.0 q3,-9 10,-9 q8,0 9,8 q1,9 -8,11 q-9,1 -11,-10z" fill="#b9dc9e"/><circle cx="448.0" cy="619.0" r="3.2" fill="#9fcb80"/><circle cx="454.0" cy="624.0" r="2.8" fill="#a7d08a"/><circle cx="435.0" cy="628.0" r="1.9" fill="#8c8c8c"/><circle cx="444.0" cy="639.0" r="1.9" fill="#8c8c8c"/><circle cx="465.0" cy="630.0" r="1.9" fill="#8c8c8c"/><circle cx="457.0" cy="616.0" r="1.9" fill="#8c8c8c"/><path d="M434.0,619.0 l7,-3 l-2,5 z" fill="#cc1f2e"/><path d="M464.0,620.0 l7,-3 l-2,5 z" fill="#cc1f2e"/><path d="M433.0,639.0 l7,-3 l-2,5 z" fill="#cc1f2e"/><path d="M462.0,640.0 l7,-3 l-2,5 z" fill="#cc1f2e"/><g opacity="1.0" fill="none" stroke="#c3ad82" stroke-width="1.1"><path d="M419.0,657.0 L419.0,637.0 L430.0,641.0 L430.0,661.0"/><path d="M422.5,638.5 L422.5,649.0 M426.0,639.7 L426.0,650.0 M419.0,649.0 L430.0,653.0"/><path d="M419.0,657.0 L420.0,670.0 M430.0,661.0 L431.0,673.0 M424.0,653.0 L435.0,656.0"/></g><g opacity="1.0" fill="none" stroke="#c3ad82" stroke-width="1.1"><path d="M466.0,653.0 L466.0,636.0 L475.4,639.4 L475.4,656.4"/><path d="M469.0,637.3 L469.0,646.2 M471.9,638.3 L471.9,647.0 M466.0,646.2 L475.4,649.6"/><path d="M466.0,653.0 L466.9,664.0 M475.4,656.4 L476.2,666.6 M470.2,649.6 L479.6,652.1"/></g>
<g opacity="0.8" fill="none" stroke="#c3ad82" stroke-width="1.1"><path d="M478.0,658.0 L478.0,642.0 L486.8,645.2 L486.8,661.2"/><path d="M480.8,643.2 L480.8,651.6 M483.6,644.2 L483.6,652.4 M478.0,651.6 L486.8,654.8"/><path d="M478.0,658.0 L478.8,668.4 M486.8,661.2 L487.6,670.8 M482.0,654.8 L490.8,657.2"/></g><g opacity="0.8" fill="none" stroke="#c3ad82" stroke-width="1.1"><path d="M526.0,657.0 L526.0,641.0 L534.8,644.2 L534.8,660.2"/><path d="M528.8,642.2 L528.8,650.6 M531.6,643.2 L531.6,651.4 M526.0,650.6 L534.8,653.8"/><path d="M526.0,657.0 L526.8,667.4 M534.8,660.2 L535.6,669.8 M530.0,653.8 L538.8,656.2"/></g><polygon points="473.0,672.0 505.0,693.0 546.0,671.0 546.0,697.0 505.0,719.0 473.0,698.0" fill="#f3f3f3" /><polygon points="505.0,693.0 546.0,671.0 546.0,697.0 505.0,719.0" fill="#fbfbfb" /><polygon points="473.0,672.0 513.0,651.0 546.0,671.0 505.0,693.0" fill="#ffffff" /><path d="M498.0,663.0 q3,-9 10,-9 q8,0 9,8 q1,9 -8,11 q-9,1 -11,-10z" fill="#b9dc9e"/><circle cx="505.0" cy="661.0" r="3.2" fill="#9fcb80"/><circle cx="511.0" cy="666.0" r="2.8" fill="#a7d08a"/><circle cx="492.0" cy="670.0" r="1.9" fill="#8c8c8c"/><circle cx="501.0" cy="681.0" r="1.9" fill="#8c8c8c"/><circle cx="522.0" cy="672.0" r="1.9" fill="#8c8c8c"/><circle cx="514.0" cy="658.0" r="1.9" fill="#8c8c8c"/><path d="M491.0,661.0 l7,-3 l-2,5 z" fill="#cc1f2e"/><path d="M521.0,662.0 l7,-3 l-2,5 z" fill="#cc1f2e"/><path d="M490.0,681.0 l7,-3 l-2,5 z" fill="#cc1f2e"/><path d="M519.0,682.0 l7,-3 l-2,5 z" fill="#cc1f2e"/><g opacity="1.0" fill="none" stroke="#c3ad82" stroke-width="1.1"><path d="M476.0,699.0 L476.0,679.0 L487.0,683.0 L487.0,703.0"/><path d="M479.5,680.5 L479.5,691.0 M483.0,681.7 L483.0,692.0 M476.0,691.0 L487.0,695.0"/><path d="M476.0,699.0 L477.0,712.0 M487.0,703.0 L488.0,715.0 M481.0,695.0 L492.0,698.0"/></g><g opacity="1.0" fill="none" stroke="#c3ad82" stroke-width="1.1"><path d="M523.0,695.0 L523.0,678.0 L532.4,681.4 L532.4,698.4"/><path d="M526.0,679.3 L526.0,688.2 M529.0,680.3 L529.0,689.0 M523.0,688.2 L532.4,691.6"/><path d="M523.0,695.0 L523.9,706.0 M532.4,698.4 L533.2,708.6 M527.2,691.6 L536.6,694.1"/></g>
<g opacity="0.8" fill="none" stroke="#c3ad82" stroke-width="1.1"><path d="M534.0,703.0 L534.0,687.0 L542.8,690.2 L542.8,706.2"/><path d="M536.8,688.2 L536.8,696.6 M539.6,689.2 L539.6,697.4 M534.0,696.6 L542.8,699.8"/><path d="M534.0,703.0 L534.8,713.4 M542.8,706.2 L543.6,715.8 M538.0,699.8 L546.8,702.2"/></g><g opacity="0.8" fill="none" stroke="#c3ad82" stroke-width="1.1"><path d="M582.0,702.0 L582.0,686.0 L590.8,689.2 L590.8,705.2"/><path d="M584.8,687.2 L584.8,695.6 M587.6,688.2 L587.6,696.4 M582.0,695.6 L590.8,698.8"/><path d="M582.0,702.0 L582.8,712.4 M590.8,705.2 L591.6,714.8 M586.0,698.8 L594.8,701.2"/></g><polygon points="529.0,717.0 561.0,738.0 602.0,716.0 602.0,742.0 561.0,764.0 529.0,743.0" fill="#f3f3f3" /><polygon points="561.0,738.0 602.0,716.0 602.0,742.0 561.0,764.0" fill="#fbfbfb" /><polygon points="529.0,717.0 569.0,696.0 602.0,716.0 561.0,738.0" fill="#ffffff" /><path d="M554.0,708.0 q3,-9 10,-9 q8,0 9,8 q1,9 -8,11 q-9,1 -11,-10z" fill="#b9dc9e"/><circle cx="561.0" cy="706.0" r="3.2" fill="#9fcb80"/><circle cx="567.0" cy="711.0" r="2.8" fill="#a7d08a"/><circle cx="548.0" cy="715.0" r="1.9" fill="#8c8c8c"/><circle cx="557.0" cy="726.0" r="1.9" fill="#8c8c8c"/><circle cx="578.0" cy="717.0" r="1.9" fill="#8c8c8c"/><circle cx="570.0" cy="703.0" r="1.9" fill="#8c8c8c"/><path d="M547.0,706.0 l7,-3 l-2,5 z" fill="#cc1f2e"/><path d="M577.0,707.0 l7,-3 l-2,5 z" fill="#cc1f2e"/><path d="M546.0,726.0 l7,-3 l-2,5 z" fill="#cc1f2e"/><path d="M575.0,727.0 l7,-3 l-2,5 z" fill="#cc1f2e"/><g opacity="1.0" fill="none" stroke="#c3ad82" stroke-width="1.1"><path d="M532.0,744.0 L532.0,724.0 L543.0,728.0 L543.0,748.0"/><path d="M535.5,725.5 L535.5,736.0 M539.0,726.7 L539.0,737.0 M532.0,736.0 L543.0,740.0"/><path d="M532.0,744.0 L533.0,757.0 M543.0,748.0 L544.0,760.0 M537.0,740.0 L548.0,743.0"/></g><g opacity="1.0" fill="none" stroke="#c3ad82" stroke-width="1.1"><path d="M579.0,740.0 L579.0,723.0 L588.4,726.4 L588.4,743.4"/><path d="M582.0,724.3 L582.0,733.2 M585.0,725.3 L585.0,734.0 M579.0,733.2 L588.4,736.6"/><path d="M579.0,740.0 L579.9,751.0 M588.4,743.4 L589.2,753.6 M583.2,736.6 L592.6,739.1"/></g>
<g opacity="0.8" fill="none" stroke="#c3ad82" stroke-width="1.1"><path d="M581.0,761.0 L581.0,745.0 L589.8,748.2 L589.8,764.2"/><path d="M583.8,746.2 L583.8,754.6 M586.6,747.2 L586.6,755.4 M581.0,754.6 L589.8,757.8"/><path d="M581.0,761.0 L581.8,771.4 M589.8,764.2 L590.6,773.8 M585.0,757.8 L593.8,760.2"/></g><g opacity="0.8" fill="none" stroke="#c3ad82" stroke-width="1.1"><path d="M629.0,760.0 L629.0,744.0 L637.8,747.2 L637.8,763.2"/><path d="M631.8,745.2 L631.8,753.6 M634.6,746.2 L634.6,754.4 M629.0,753.6 L637.8,756.8"/><path d="M629.0,760.0 L629.8,770.4 M637.8,763.2 L638.6,772.8 M633.0,756.8 L641.8,759.2"/></g><polygon points="576.0,775.0 608.0,796.0 649.0,774.0 649.0,800.0 608.0,822.0 576.0,801.0" fill="#f3f3f3" /><polygon points="608.0,796.0 649.0,774.0 649.0,800.0 608.0,822.0" fill="#fbfbfb" /><polygon points="576.0,775.0 616.0,754.0 649.0,774.0 608.0,796.0" fill="#ffffff" /><path d="M601.0,766.0 q3,-9 10,-9 q8,0 9,8 q1,9 -8,11 q-9,1 -11,-10z" fill="#b9dc9e"/><circle cx="608.0" cy="764.0" r="3.2" fill="#9fcb80"/><circle cx="614.0" cy="769.0" r="2.8" fill="#a7d08a"/><circle cx="595.0" cy="773.0" r="1.9" fill="#8c8c8c"/><circle cx="604.0" cy="784.0" r="1.9" fill="#8c8c8c"/><circle cx="625.0" cy="775.0" r="1.9" fill="#8c8c8c"/><circle cx="617.0" cy="761.0" r="1.9" fill="#8c8c8c"/><path d="M594.0,764.0 l7,-3 l-2,5 z" fill="#cc1f2e"/><path d="M624.0,765.0 l7,-3 l-2,5 z" fill="#cc1f2e"/><path d="M593.0,784.0 l7,-3 l-2,5 z" fill="#cc1f2e"/><path d="M622.0,785.0 l7,-3 l-2,5 z" fill="#cc1f2e"/><g opacity="1.0" fill="none" stroke="#c3ad82" stroke-width="1.1"><path d="M579.0,802.0 L579.0,782.0 L590.0,786.0 L590.0,806.0"/><path d="M582.5,783.5 L582.5,794.0 M586.0,784.7 L586.0,795.0 M579.0,794.0 L590.0,798.0"/><path d="M579.0,802.0 L580.0,815.0 M590.0,806.0 L591.0,818.0 M584.0,798.0 L595.0,801.0"/></g><g opacity="1.0" fill="none" stroke="#c3ad82" stroke-width="1.1"><path d="M626.0,798.0 L626.0,781.0 L635.4,784.4 L635.4,801.4"/><path d="M629.0,782.3 L629.0,791.2 M632.0,783.3 L632.0,792.0 M626.0,791.2 L635.4,794.6"/><path d="M626.0,798.0 L626.9,809.0 M635.4,801.4 L636.2,811.6 M630.2,794.6 L639.6,797.1"/></g>
<polygon points="287.0,466.0 600.0,698.0 600.0,705.0 291.0,474.0" fill="#a9a9a9" />
<polygon points="287.0,470.0 294.0,470.0 329.0,622.0 322.0,624.0" fill="#a6a6a6" />
<path d="M303.7,509.2 L312.9,544.3 L332.9,565.6" fill="none" stroke="#3e3e3e" stroke-width="1.6" stroke-dasharray="1.5 0.8"/><path d="M313.4,551.7 L330.2,619.8 L348.9,641.9" fill="none" stroke="#3e3e3e" stroke-width="1.6" stroke-dasharray="1.5 0.8"/><path d="M330.7,530.1 L339.3,565.6 L360.2,587.7" fill="none" stroke="#3e3e3e" stroke-width="1.6" stroke-dasharray="1.5 0.8"/><path d="M339.8,573.0 L355.3,641.9 L375.0,664.9" fill="none" stroke="#3e3e3e" stroke-width="1.6" stroke-dasharray="1.5 0.8"/><path d="M358.7,551.7 L366.6,587.7 L391.4,613.0" fill="none" stroke="#3e3e3e" stroke-width="1.6" stroke-dasharray="1.5 0.8"/><path d="M367.1,595.1 L381.4,664.9 L404.8,691.1" fill="none" stroke="#3e3e3e" stroke-width="1.6" stroke-dasharray="1.5 0.8"/><path d="M390.7,576.4 L397.8,613.0 L427.5,642.2" fill="none" stroke="#3e3e3e" stroke-width="1.6" stroke-dasharray="1.5 0.8"/><path d="M398.3,620.4 L411.2,691.1 L439.3,721.4" fill="none" stroke="#3e3e3e" stroke-width="1.6" stroke-dasharray="1.5 0.8"/><path d="M427.7,605.0 L433.9,642.2 L459.6,668.2" fill="none" stroke="#3e3e3e" stroke-width="1.6" stroke-dasharray="1.5 0.8"/><path d="M434.4,649.6 L445.7,721.4 L470.0,748.5" fill="none" stroke="#3e3e3e" stroke-width="1.6" stroke-dasharray="1.5 0.8"/><path d="M460.7,630.5 L466.0,668.2 L497.7,699.0" fill="none" stroke="#3e3e3e" stroke-width="1.6" stroke-dasharray="1.5 0.8"/><path d="M466.5,675.6 L476.4,748.5 L506.4,780.4" fill="none" stroke="#3e3e3e" stroke-width="1.6" stroke-dasharray="1.5 0.8"/><path d="M499.7,660.6 L504.1,699.0 L535.7,729.8" fill="none" stroke="#3e3e3e" stroke-width="1.6" stroke-dasharray="1.5 0.8"/><path d="M504.6,706.4 L512.8,780.4 L542.7,812.4" fill="none" stroke="#3e3e3e" stroke-width="1.6" stroke-dasharray="1.5 0.8"/><path d="M538.7,690.8 L542.1,729.8 L576.7,763.0" fill="none" stroke="#3e3e3e" stroke-width="1.6" stroke-dasharray="1.5 0.8"/><path d="M542.6,737.2 L549.1,812.4 L581.8,846.8" fill="none" stroke="#3e3e3e" stroke-width="1.6" stroke-dasharray="1.5 0.8"/><polyline points="300.0,505.0 327.0,525.9 355.0,547.5 387.0,572.2 424.0,600.8 457.0,626.3 496.0,656.4 535.0,686.6 577.0,719.0" fill="none" stroke="#ffffff" stroke-width="5" stroke-linecap="square"/><polyline points="309.7,547.5 336.1,568.8 363.4,590.9 394.6,616.2 430.7,645.4 462.8,671.4 500.9,702.2 538.9,733.0 579.9,766.2" fill="none" stroke="#ffffff" stroke-width="4.5"/><polyline points="327.0,623.0 352.1,645.1 378.2,668.1 408.0,694.3 442.5,724.6 473.2,751.7 509.6,783.6 545.9,815.6 585.0,850.0" fill="none" stroke="#ffffff" stroke-width="4" stroke-linecap="square"/><line x1="300.0" y1="505.0" x2="327.0" y2="623.0" stroke="#ffffff" stroke-width="5" /><line x1="327.0" y1="525.9" x2="352.1" y2="645.1" stroke="#ffffff" stroke-width="5" /><line x1="355.0" y1="547.5" x2="378.2" y2="668.1" stroke="#ffffff" stroke-width="5" /><line x1="387.0" y1="572.2" x2="408.0" y2="694.3" stroke="#ffffff" stroke-width="5" /><line x1="424.0" y1="600.8" x2="442.5" y2="724.6" stroke="#ffffff" stroke-width="5" /><line x1="457.0" y1="626.3" x2="473.2" y2="751.7" stroke="#ffffff" stroke-width="5" /><line x1="496.0" y1="656.4" x2="509.6" y2="783.6" stroke="#ffffff" stroke-width="5" /><line x1="535.0" y1="686.6" x2="545.9" y2="815.6" stroke="#ffffff" stroke-width="5" /><line x1="577.0" y1="719.0" x2="585.0" y2="850.0" stroke="#ffffff" stroke-width="5" />
<polygon points="1098.0,443.0 760.0,696.0 760.0,703.0 1098.0,450.0" fill="#a9a9a9" />
<polygon points="1051.0,480.0 1057.0,478.0 1022.0,629.0 1017.0,629.0" fill="#a6a6a6" />
<path d="M804.4,734.3 L837.6,703.0 L841.3,666.2" fill="none" stroke="#3e3e3e" stroke-width="1.6" stroke-dasharray="1.5 0.8"/><path d="M797.2,818.8 L829.8,785.1 L837.1,710.4" fill="none" stroke="#3e3e3e" stroke-width="1.6" stroke-dasharray="1.5 0.8"/><path d="M844.0,703.0 L875.5,673.1 L880.3,636.9" fill="none" stroke="#3e3e3e" stroke-width="1.6" stroke-dasharray="1.5 0.8"/><path d="M836.2,785.1 L865.8,754.1 L875.0,680.5" fill="none" stroke="#3e3e3e" stroke-width="1.6" stroke-dasharray="1.5 0.8"/><path d="M882.0,673.1 L909.5,646.2 L914.3,611.3" fill="none" stroke="#3e3e3e" stroke-width="1.6" stroke-dasharray="1.5 0.8"/><path d="M872.2,754.1 L899.8,724.7 L909.0,653.6" fill="none" stroke="#3e3e3e" stroke-width="1.6" stroke-dasharray="1.5 0.8"/><path d="M916.0,646.2 L943.8,619.1 L949.3,585.0" fill="none" stroke="#3e3e3e" stroke-width="1.6" stroke-dasharray="1.5 0.8"/><path d="M906.2,724.7 L932.8,696.3 L943.3,626.5" fill="none" stroke="#3e3e3e" stroke-width="1.6" stroke-dasharray="1.5 0.8"/><path d="M950.2,619.1 L974.5,594.9 L980.3,561.7" fill="none" stroke="#3e3e3e" stroke-width="1.6" stroke-dasharray="1.5 0.8"/><path d="M939.2,696.3 L962.8,670.4 L974.0,602.3" fill="none" stroke="#3e3e3e" stroke-width="1.6" stroke-dasharray="1.5 0.8"/><path d="M980.9,594.9 L1002.8,572.8 L1010.3,539.2" fill="none" stroke="#3e3e3e" stroke-width="1.6" stroke-dasharray="1.5 0.8"/><path d="M969.2,670.4 L987.8,648.8 L1002.2,580.2" fill="none" stroke="#3e3e3e" stroke-width="1.6" stroke-dasharray="1.5 0.8"/><polyline points="805.0,692.0 845.0,662.0 884.0,632.7 918.0,607.1 953.0,580.8 984.0,557.5 1014.0,535.0" fill="none" stroke="#ffffff" stroke-width="5" stroke-linecap="square"/><polyline points="801.1,737.5 840.8,706.2 878.8,676.3 912.8,649.4 947.0,622.3 977.7,598.1 1006.0,576.0" fill="none" stroke="#ffffff" stroke-width="4.5"/><polyline points="794.0,822.0 833.0,788.3 869.0,757.3 903.0,727.9 936.0,699.5 966.0,673.6 991.0,652.0" fill="none" stroke="#ffffff" stroke-width="4" stroke-linecap="square"/><line x1="805.0" y1="692.0" x2="794.0" y2="822.0" stroke="#ffffff" stroke-width="5" /><line x1="845.0" y1="662.0" x2="833.0" y2="788.3" stroke="#ffffff" stroke-width="5" /><line x1="884.0" y1="632.7" x2="869.0" y2="757.3" stroke="#ffffff" stroke-width="5" /><line x1="918.0" y1="607.1" x2="903.0" y2="727.9" stroke="#ffffff" stroke-width="5" /><line x1="953.0" y1="580.8" x2="936.0" y2="699.5" stroke="#ffffff" stroke-width="5" /><line x1="984.0" y1="557.5" x2="966.0" y2="673.6" stroke="#ffffff" stroke-width="5" /><line x1="1014.0" y1="535.0" x2="991.0" y2="652.0" stroke="#ffffff" stroke-width="5" />
<line x1="887.5" y1="630.0" x2="872.0" y2="754.7" stroke="#ffffff" stroke-width="4" />
<line x1="956.0" y1="578.6" x2="939.0" y2="696.9" stroke="#ffffff" stroke-width="4" />
<polygon points="603.0,702.0 682.0,652.0 757.0,701.0 740.0,869.0 682.0,823.0 619.0,873.0" fill="#726a64" />
<polygon points="619.0,873.0 682.0,822.0 740.0,869.0 686.0,921.0 675.0,913.0 664.0,921.0" fill="#a2866f" />
<polygon points="619.0,873.0 682.0,822.0 740.0,869.0 686.0,921.0 675.0,913.0 664.0,921.0" fill="url(#wood)" />
<polygon points="692.0,752.0 737.0,784.0 734.0,861.0 692.0,830.0" fill="#f0f0f0" stroke="#dcdcdc" stroke-width="1"/>
<path d="M698,797 l4,3" stroke="#222" stroke-width="1.5"/>
<path d="M603,702 L682,652 L757,701 L688,748 L676,738 L664,748 Z" fill="none" stroke="#a9a9a9" stroke-width="8" stroke-linejoin="miter"/>
<polygon points="598.0,702.0 608.0,702.0 619.0,873.0 609.0,873.0" fill="#a3a3a3" />
<polygon points="751.0,701.0 760.0,700.0 750.0,869.0 740.0,869.0" fill="#a3a3a3" />
</g>
</svg>
<div style="position:absolute;left:1272px;top:112px;width:400px;height:862px;background:#fff"></div>
<div style="position:absolute;left:1405px;top:112px;width:267px;height:48px;background:#f0f0f0"></div>
<div class="t" style="left:1319.80px;top:128.67px;font-size:13.85px;color:#262626;transform:scaleX(0.8881);transform-origin:0 0;">ITEMS</div>
<div class="t" style="left:1436.60px;top:128.67px;font-size:13.85px;color:#262626;transform:scaleX(0.9254);transform-origin:0 0;">FAVORITES</div>
<div class="t" style="left:1577.70px;top:128.67px;font-size:13.85px;color:#262626;transform:scaleX(0.9176);transform-origin:0 0;">GROUPS</div>
<div class="t" style="left:1292.30px;top:160.55px;font-size:12.35px;color:#6a6a6a;transform:scaleX(1.1256);transform-origin:0 0;">Catalog</div>
<div class="t" style="left:1292.30px;top:183.29px;font-size:17.97px;color:#262626;transform:scaleX(0.9806);transform-origin:0 0;">Banquet Library</div>
<div style="position:absolute;left:1292px;top:207px;width:360px;height:1px;background:#8a8a8a"></div>
<svg class="ic" style="left:1628px;top:180px;width:24px;height:24px" viewBox="0 0 24 24"><path fill="#777" d="M7 10l5 5 5-5z"/></svg>
<div style="position:absolute;left:1277px;top:233px;width:94px;height:90px;background:#f1f1f1"></div>
<div class="t" style="left:1315.45px;top:245.17px;font-size:35.12px;color:#1d1d1d;transform:scaleX(0.7970);transform-origin:0 0;">T</div>
<div class="t" style="left:1305.30px;top:301.39px;font-size:13.72px;color:#262626;transform:scaleX(1.1403);transform-origin:0 0;">Table</div>
<div style="position:absolute;left:1376px;top:233px;width:94px;height:90px;background:#f1f1f1"></div>
<div class="t" style="left:1413.40px;top:245.17px;font-size:35.12px;color:#1d1d1d;transform:scaleX(0.8197);transform-origin:0 0;">S</div>
<div class="t" style="left:1396.85px;top:301.39px;font-size:13.72px;color:#262626;transform:scaleX(1.1240);transform-origin:0 0;">Seating</div>
<div style="position:absolute;left:1475px;top:233px;width:93px;height:90px;background:#f1f1f1"></div>
<div class="t" style="left:1510.30px;top:245.17px;font-size:35.12px;color:#1d1d1d;transform:scaleX(0.8835);transform-origin:0 0;">D</div>
<div class="t" style="left:1501.25px;top:301.39px;font-size:13.72px;color:#262626;transform:scaleX(1.1066);transform-origin:0 0;">Décor</div>
<div style="position:absolute;left:1573px;top:233px;width:94px;height:90px;background:#f1f1f1"></div>
<div class="t" style="left:1612.70px;top:245.17px;font-size:35.12px;color:#1d1d1d;transform:scaleX(0.6805);transform-origin:0 0;">F</div>
<div class="t" style="left:1601.75px;top:301.39px;font-size:13.72px;color:#262626;transform:scaleX(1.0639);transform-origin:0 0;">Floral</div>
<div style="position:absolute;left:1277px;top:328px;width:94px;height:85px;background:#f1f1f1"></div>
<div class="t" style="left:1312.70px;top:340.17px;font-size:35.12px;color:#1d1d1d;transform:scaleX(0.9649);transform-origin:0 0;">A</div>
<div class="t" style="left:1314.95px;top:396.39px;font-size:13.72px;color:#262626;transform:scaleX(1.0472);transform-origin:0 0;">AV</div>
<div style="position:absolute;left:1376px;top:328px;width:94px;height:85px;background:#f1f1f1"></div>
<div class="t" style="left:1393.35px;top:340.17px;font-size:35.12px;color:#1d1d1d;transform:scaleX(1.0136);transform-origin:0 0;">WD</div>
<div class="t" style="left:1386.00px;top:396.39px;font-size:13.72px;color:#262626;transform:scaleX(1.1116);transform-origin:0 0;">Wall Decor</div>
<div style="position:absolute;left:1475px;top:328px;width:93px;height:85px;background:#f1f1f1"></div>
<div class="t" style="left:1514.30px;top:340.17px;font-size:35.12px;color:#1d1d1d;transform:scaleX(0.6711);transform-origin:0 0;">F</div>
<div class="t" style="left:1494.20px;top:396.39px;font-size:13.72px;color:#262626;transform:scaleX(1.1017);transform-origin:0 0;">Flooring</div>
<div style="position:absolute;left:1573px;top:328px;width:94px;height:85px;background:#f1f1f1"></div>
<div class="t" style="left:1613.45px;top:340.17px;font-size:35.12px;color:#1d1d1d;transform:scaleX(0.5593);transform-origin:0 0;">E</div>
<div class="t" style="left:1601.50px;top:396.39px;font-size:13.72px;color:#262626;transform:scaleX(1.0549);transform-origin:0 0;">Event</div>
<svg class="ic" style="left:1460.2px;top:425.8px;width:24px;height:24px" viewBox="0 0 24 24"><path fill="#666" d="M16.59 8.59L12 13.17 7.41 8.59 6 10l6 6 6-6z"/></svg>
<div style="position:absolute;left:1272px;top:458px;width:385px;height:280px;background:radial-gradient(ellipse farthest-corner at 48% 44%,#ebebeb 0%,#d2d2d2 33%,#a2a2a2 100%)"></div>
<svg class="ic" style="left:1272px;top:458px;width:385px;height:280px" viewBox="1272 458 385 280">
<defs><linearGradient id="lidg" x1="0" y1="0" x2="1" y2="0.3"><stop offset="0" stop-color="#8a8a8a"/><stop offset="0.5" stop-color="#b9b9b9"/><stop offset="1" stop-color="#a0a0a0"/></linearGradient></defs>
<polygon points="1377,595 1494,543.6 1517.7,546 1517.7,552 1494,571 1452,586 1392,599" fill="url(#lidg)"/>
<path d="M1377,595 L1494,543.6" stroke="#1e1e1e" stroke-width="2.4"/>
<polygon points="1450,587 1494,588 1524,600 1517,608 1456,606" fill="#84654f"/>
<polygon points="1396,599 1428,580 1445,590 1456,606 1410,603" fill="#1f1f1f"/>
<path d="M1509,548 L1517,606" stroke="#3a3a3a" stroke-width="1.3"/>
<polygon points="1351,615 1367,599 1525,600 1524,628 1482,641 1353,617" fill="#2f2f2f"/><polygon points="1369,603 1480,612 1482,632 1362,613" fill="#3d3d3d"/><polygon points="1480,612 1523,603 1523,627 1482,640" fill="#353535"/><path d="M1440,570 q10,-5 18,0 q6,3 14,-4 M1470,560 q8,2 14,-3" fill="none" stroke="#7a7a7a" stroke-width="2.5" opacity="0.6"/>
<polygon points="1367,599 1525,600 1523,604 1369,603" fill="#7d7d7d"/>
<polygon points="1361,613 1477,630 1476,634 1360,617" fill="#f0f0f0"/>
<path d="M1364,614 L1474,630" stroke="#222" stroke-width="1.3" stroke-dasharray="1.2 1.6"/>
<rect x="1399" y="626" width="6" height="23" fill="#1a1a1a"/>
<ellipse cx="1402" cy="650" rx="3" ry="2" fill="#cfcfcf"/>
<rect x="1493" y="631" width="7" height="41" fill="#1a1a1a"/>
<ellipse cx="1496.5" cy="673" rx="3.2" ry="2" fill="#d0d0d0"/>
<polygon points="1427,639 1458,643 1458,656 1427,651" fill="#1c1c1c"/>
<path d="M1429,647 l27,4" stroke="#bdbdbd" stroke-width="1.5" stroke-dasharray="3 2"/>
</svg>
<svg class="ic" style="left:1282px;top:468px;width:24px;height:24px" viewBox="0 0 24 24"><path fill="#5a2a7a" d="M19 6.41L17.59 5 12 10.59 6.41 5 5 6.41 10.59 12 5 17.59 6.41 19 12 13.41 17.59 19 19 17.59 13.41 12z"/></svg>
<svg class="ic" style="left:1282px;top:699px;width:24px;height:24px" viewBox="0 0 24 24"><path fill="#5a2a7a" d="M16.5 3c-1.74 0-3.41.81-4.5 2.09C10.91 3.81 9.24 3 7.5 3 4.42 3 2 5.42 2 8.5c0 3.78 3.4 6.86 8.55 11.54L12 21.35l1.45-1.32C18.6 15.36 22 12.28 22 8.5 22 5.42 19.58 3 16.5 3zm-4.4 15.55l-.1.1-.1-.1C7.14 14.24 4 11.39 4 8.5 4 6.5 5.5 5 7.5 5c1.54 0 3.04.99 3.57 2.36h1.87C13.46 5.99 14.96 5 16.5 5c2 0 3.5 1.5 3.5 3.5 0 2.89-3.14 5.74-7.9 10.05z"/></svg>
<div style="position:absolute;left:1662px;top:462px;width:6px;height:184px;background:#8e64a0;border-radius:3px"></div>
<div class="t" style="left:1297.80px;top:769.18px;font-size:15.50px;color:#222;transform:scaleX(1.1582);transform-origin:0 0;">Name</div>
<div class="t" style="left:1409.60px;top:769.18px;font-size:15.50px;color:#222;transform:scaleX(0.9006);transform-origin:0 0;">SKU</div>
<div class="t" style="left:1495.00px;top:769.18px;font-size:15.50px;color:#222;transform:scaleX(1.0762);transform-origin:0 0;">Price</div>
<div class="t" style="left:1579.90px;top:769.18px;font-size:15.50px;color:#222;transform:scaleX(1.0813);transform-origin:0 0;">Rate</div>
<div class="t" style="left:1297.80px;top:792.77px;font-size:13.03px;color:#333;transform:scaleX(1.0045);transform-origin:0 0;">Grand Piano</div>
<div class="t" style="left:1409.60px;top:792.77px;font-size:13.03px;color:#333;transform:scaleX(0.8212);transform-origin:0 0;">??</div>
<div class="t" style="left:1495.00px;top:792.77px;font-size:13.03px;color:#333;transform:scaleX(0.9868);transform-origin:0 0;">$0</div>
<div class="t" style="left:1580.00px;top:792.77px;font-size:13.03px;color:#333;transform:scaleX(0.9686);transform-origin:0 0;">FlatRate</div>
<div class="t" style="left:1287.60px;top:834.05px;font-size:13.17px;color:#666;transform:scaleX(1.1214);transform-origin:0 0;">Name</div>
<div class="t" style="left:1512.40px;top:830.57px;font-size:16.46px;color:#222;transform:scaleX(1.0614);transform-origin:0 0;">Grand Piano</div>
<div style="position:absolute;left:1472px;top:854px;width:179px;height:1px;background:#8a8a8a"></div>
<div style="position:absolute;left:1279px;top:880px;width:184px;height:34px;border:1px solid #a585b6;border-radius:5px"></div>
<div class="t" style="left:1353.30px;top:891.77px;font-size:13.85px;color:#4b2a6a;transform:scaleX(0.9449);transform-origin:0 0;">COPY</div>
<div style="position:absolute;left:1479px;top:880px;width:184px;height:34px;border:1px solid #a585b6;border-radius:5px"></div>
<div class="t" style="left:1549.50px;top:891.77px;font-size:13.85px;color:#4b2a6a;transform:scaleX(0.8220);transform-origin:0 0;">DELETE</div>
<div style="position:absolute;left:1279px;top:931px;width:184px;height:34px;border:1px solid #a585b6;border-radius:5px"></div>
<div class="t" style="left:1309.00px;top:942.77px;font-size:13.85px;color:#4b2a6a;transform:scaleX(0.9492);transform-origin:0 0;">ADD TO FAVORITES</div>
<div style="position:absolute;left:1479px;top:931px;width:184px;height:34px;border:1px solid #a585b6;border-radius:5px"></div>
<div class="t" style="left:1543.50px;top:942.77px;font-size:13.85px;color:#4b2a6a;transform:scaleX(0.9184);transform-origin:0 0;">PATTERN</div>
<div style="position:absolute;left:89px;top:935px;width:28px;height:28px;background:#fff;border:1px solid #ececec;border-radius:6px"></div>
<div style="position:absolute;left:129px;top:935px;width:28px;height:28px;background:#fff;border:1px solid #ececec;border-radius:6px"></div>
<div style="position:absolute;left:169px;top:935px;width:28px;height:28px;background:#fff;border:1px solid #ececec;border-radius:6px"></div>
<svg class="ic" style="left:92px;top:938px;width:24px;height:24px" viewBox="0 0 24 24"><path fill="#5a2379" d="M18 8h-1V6c0-2.76-2.24-5-5-5S7 3.24 7 6v2H6c-1.1 0-2 .9-2 2v10c0 1.1.9 2 2 2h12c1.1 0 2-.9 2-2V10c0-1.1-.9-2-2-2zm-6 9c-1.1 0-2-.9-2-2s.9-2 2-2 2 .9 2 2-.9 2-2 2zm3.1-9H8.9V6c0-1.71 1.39-3.1 3.1-3.1 1.71 0 3.1 1.39 3.1 3.1v2z"/></svg>
<svg class="ic" style="left:132px;top:938px;width:24px;height:24px" viewBox="0 0 24 24"><path fill="#6f6f6f" d="M18 7l-1.41-1.41-6.34 6.34 1.41 1.41L18 7zm4.24-1.41L11.66 16.17 7.48 12l-1.41 1.41L11.66 19l12-12-1.42-1.41zM.41 13.41L6 19l1.41-1.41L1.83 12 .41 13.41z"/></svg>
<svg class="ic" style="left:172px;top:938px;width:24px;height:24px" viewBox="0 0 24 24"><path fill="#6f6f6f" d="M12 6c3.79 0 7.17 2.13 8.82 5.5C19.17 14.87 15.79 17 12 17s-7.17-2.13-8.82-5.5C4.83 8.13 8.21 6 12 6m0-2C7 4 2.73 7.11 1 11.5 2.73 15.89 7 19 12 19s9.27-3.11 11-7.5C21.27 7.11 17 4 12 4zm0 5c1.38 0 2.5 1.12 2.5 2.5S13.38 14 12 14s-2.5-1.12-2.5-2.5S10.62 9 12 9m0-2c-2.48 0-4.5 2.02-4.5 4.5S9.52 16 12 16s4.5-2.02 4.5-4.5S14.48 7 12 7z"/></svg>
<div style="position:absolute;left:1073px;top:935px;width:28px;height:28px;background:#fff;border:1px solid #ececec;border-radius:6px"></div>
<div style="position:absolute;left:1113px;top:935px;width:28px;height:28px;background:#fff;border:1px solid #ececec;border-radius:6px"></div>
<div style="position:absolute;left:1153px;top:935px;width:28px;height:28px;background:#fff;border:1px solid #ececec;border-radius:6px"></div>
<div style="position:absolute;left:1193px;top:935px;width:28px;height:28px;background:#fff;border:1px solid #ececec;border-radius:6px"></div>
<div style="position:absolute;left:1233px;top:935px;width:28px;height:28px;background:#fff;border:1px solid #ececec;border-radius:6px"></div>
<svg class="ic" style="left:1076px;top:938px;width:24px;height:24px" viewBox="0 0 24 24"><path fill="#6f6f6f" d="M7.52 21.48C4.25 19.94 1.91 16.76 1.55 13H.05C.56 19.16 5.71 24 12 24l.66-.03-3.81-3.81-1.33 1.32zm.89-6.52c-.19 0-.37-.03-.52-.08-.16-.06-.29-.13-.4-.24-.11-.1-.2-.22-.26-.37-.06-.14-.09-.3-.09-.47h-1.3c0 .36.07.68.21.95.14.27.33.5.56.69.24.18.51.32.82.41.3.1.62.15.96.15.37 0 .72-.05 1.03-.15.32-.1.6-.25.83-.44s.42-.43.55-.72c.13-.29.2-.61.2-.97 0-.19-.02-.38-.07-.56-.05-.18-.12-.35-.23-.51-.1-.16-.24-.3-.4-.43-.17-.13-.37-.23-.61-.31.2-.09.37-.2.52-.33.15-.13.27-.27.37-.42.1-.15.17-.3.22-.46.05-.16.07-.32.07-.48 0-.36-.06-.68-.18-.96-.12-.28-.29-.51-.51-.69-.2-.19-.47-.33-.77-.43C9.1 8.05 8.76 8 8.39 8c-.36 0-.69.05-1 .16-.3.11-.57.26-.79.45-.21.19-.38.41-.51.67-.12.26-.18.54-.18.85h1.3c0-.17.03-.32.09-.45s.14-.25.25-.34c.11-.09.23-.17.38-.22.15-.05.3-.08.48-.08.4 0 .7.1.89.31.19.2.29.49.29.86 0 .18-.03.34-.08.49-.05.15-.14.27-.25.37-.11.1-.25.18-.41.24-.16.06-.36.09-.58.09H7.5v1.03h.77c.22 0 .42.02.6.07s.33.13.45.23c.12.11.22.24.29.4.07.16.1.35.1.57 0 .41-.12.72-.35.93-.23.23-.55.33-.95.33zm8.55-5.920c-.32-.33-.7-.59-1.14-.77-.43-.18-.92-.27-1.46-.27H12v8h2.3c.55 0 1.06-.09 1.51-.27.45-.18.84-.43 1.16-.76.32-.33.57-.73.74-1.19.17-.47.26-.99.26-1.57v-.4c0-.58-.09-1.1-.26-1.57-.18-.47-.43-.87-.75-1.2zm-.39 3.16c0 .42-.05.79-.14 1.13-.1.33-.24.62-.43.85-.19.23-.43.41-.71.53-.29.12-.62.18-.99.18h-.91V9.12h.97c.72 0 1.27.23 1.64.69.38.46.57 1.12.57 1.99v.4zM12 0l-.66.03 3.81 3.81 1.33-1.33c3.27 1.55 5.61 4.72 5.96 8.48h1.5C23.44 4.84 18.29 0 12 0z"/></svg>
<svg class="ic" style="left:1116px;top:938px;width:24px;height:24px" viewBox="0 0 24 24"><rect x="3" y="3" width="18" height="18" rx="2" fill="#6f6f6f"/><path fill="#fff" d="M3 12.2l3.6-3.2 3 3 2.4-2.6 3 2.6 3-2.6 3 2.6v2.6l-3-2.6-3 2.6-3-2.6-2.4 2.6-3-3-3.6 3.2z"/></svg>
<svg class="ic" style="left:1156px;top:938px;width:24px;height:24px" viewBox="0 0 24 24"><path fill="#6f6f6f" d="M19 13H5v-2h14v2z"/></svg>
<svg class="ic" style="left:1196px;top:938px;width:24px;height:24px" viewBox="0 0 24 24"><path fill="#6f6f6f" d="M19 13h-6v6h-2v-6H5v-2h6V5h2v6h6v2z"/></svg>
<svg class="ic" style="left:1236px;top:938px;width:24px;height:24px" viewBox="0 0 24 24"><path fill="#6f6f6f" d="M19 12h-2v3h-3v2h5v-5zM7 9h3V7H5v5h2V9zm14-6H3c-1.1 0-2 .9-2 2v14c0 1.1.9 2 2 2h18c1.1 0 2-.9 2-2V5c0-1.1-.9-2-2-2zm0 16.01H3V4.99h18v14.02z"/></svg>
<svg style="position:absolute;left:0;top:0;width:1672px;height:974px;pointer-events:none" viewBox="0 0 1672 974"><!-- corners -->
<path d="M0.5,7.5 A7,7 0 0 1 7.5,0.5 M1664.5,0.5 A7,7 0 0 1 1671.5,7.5 M1671.5,966.5 A7,7 0 0 1 1664.5,973.5 M7.5,973.5 A7,7 0 0 1 0.5,966.5" fill="none" stroke="#e0e0e0" stroke-width="1.5"/>
</svg>
</body></html>
